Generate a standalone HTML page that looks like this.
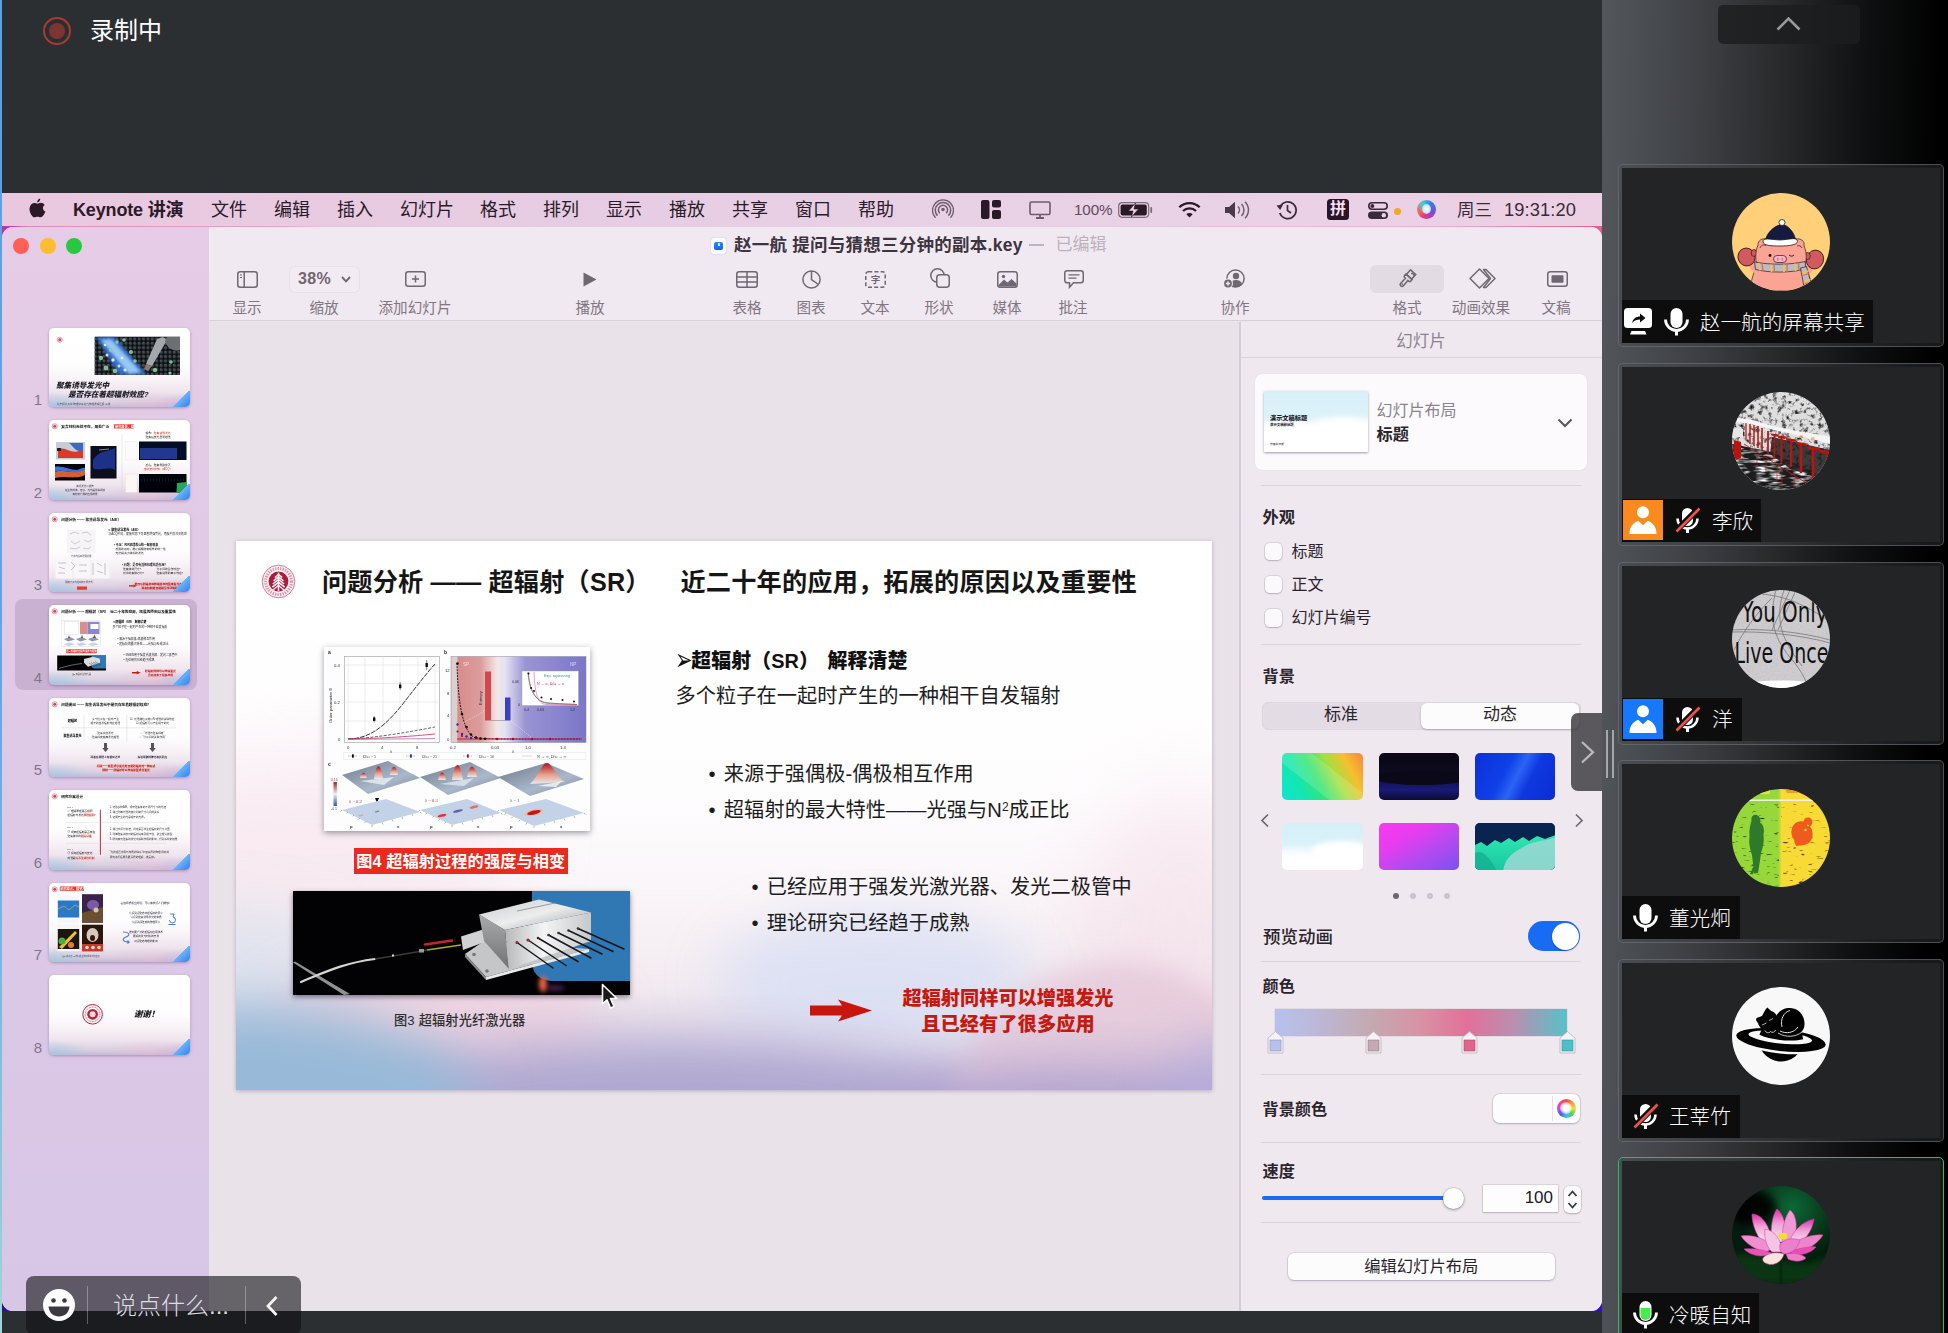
<!DOCTYPE html>
<html lang="zh-CN">
<head>
<meta charset="utf-8">
<title>Keynote 屏幕共享</title>
<style>
*{box-sizing:border-box;margin:0;padding:0}
html,body{width:1948px;height:1333px;overflow:hidden;background:#2c2f32}
body{position:relative;font-family:"Liberation Sans","Noto Sans CJK SC",sans-serif;color:#222;-webkit-font-smoothing:antialiased}
.abs{position:absolute}
#strip{left:0;top:0;width:2px;height:1333px;background:linear-gradient(#5b9fe3 0%,#62a6e4 50%,#86c0dc 82%,#a2d4d8 100%)}
#share{left:2px;top:0;width:1600px;height:1333px;background:#2c2f32;overflow:hidden}
#rec{left:41px;top:17px;width:28px;height:28px;border-radius:50%;border:2px solid #a83a32}
#rec i{position:absolute;left:4px;top:4px;width:16px;height:16px;border-radius:50%;background:#7d3531}
#rectxt{left:88px;top:13px;font-size:24px;color:#fff;line-height:36px;letter-spacing:0px}
/* menubar */
#menubar{left:0;top:193px;width:1600px;height:34px;background:linear-gradient(90deg,#e9c8df,#e6cde3 40%,#e9d2e6 70%,#ecd0e4);}
#menubar span{position:absolute;top:0;line-height:34.600px;font-size:18px;color:#2a1a2a;white-space:nowrap}
/* window */
#win{left:0;top:227px;width:1600px;height:1084px;border-radius:11px;background:#ebe4eb;overflow:hidden}
#wbehind{left:0;top:226px;width:1600px;height:30px;background:linear-gradient(90deg,#c032a0 0,#c436a2 .5%,#e58ab6 1.6%,#e9a0c4 17%,#e8c4dc 20%,#ead0e4 60%,#e8b4d0 90%,#e0608c 99.6%)}
#wbehind2{left:0;top:1290px;width:1600px;height:21px;background:linear-gradient(90deg,#2a1090,#4a2aa0 3%,#8a80b0 50%,#3010c0)}
#sidebar{left:0;top:0;width:207px;height:1084px;background:linear-gradient(180deg,#e6cce6,#dcc8e6 60%,#d8c6e6)}
#toolbar{left:207px;top:0;width:1393px;height:94px;background:#f1e9f1;border-bottom:1px solid #d9d0da}
#canvas{left:207px;top:95px;width:1031px;height:989px;background:#e9e2e9}
#panel{left:1239px;top:95px;width:361px;height:989px;background:#efe8ef}
#bottomstrip{left:0;top:1311px;width:1600px;height:22px;background:#2c2f32}
/* right participants */
#right{left:1602px;top:0;width:346px;height:1333px;background:linear-gradient(91deg,#53575c 0%,#3d3f43 28%,#262729 51%,#0f1011 72%,#000 92%)}
</style>
</head>
<body>
<div id="strip" class="abs"></div>
<div id="share" class="abs">
  <div id="rec" class="abs"><i></i></div>
  <div id="rectxt" class="abs">录制中</div>
  <div id="menubar" class="abs"><svg class="abs" style="left:26px;top:4px" width="19" height="23" viewBox="0 0 19 23"><path d="M12.600 0 C12.800 1.600 11.600 3.800 9.500 4.200 C9.200 2.500 10.700 .4 12.600 0 Z M9.700 5.400 C10.700 5.400 11.700 4.500 13.300 4.500 C14.600 4.500 16.200 5.200 17.200 6.700 C14.500 8.400 15 12.400 17.900 13.500 C17.300 15.300 16.400 16.900 15.300 18.100 C14.500 19 13.700 19.400 12.900 19.400 C11.800 19.400 11.200 18.700 9.800 18.700 C8.400 18.700 7.700 19.400 6.700 19.400 C5.800 19.400 5 18.800 4.100 17.700 C1.600 14.700 .6 9.900 2.700 7 C3.600 5.600 5.100 4.700 6.500 4.700 C7.900 4.700 8.800 5.400 9.700 5.400 Z" transform="translate(0,1.500) scale(.97)" fill="#2a1a28"/></svg>
<span style="left:71px;font-weight:700;letter-spacing:-.15px">Keynote 讲演</span>
<span style="left:209px">文件</span><span style="left:272px">编辑</span><span style="left:335px">插入</span><span style="left:398px">幻灯片</span><span style="left:478px">格式</span><span style="left:541px">排列</span><span style="left:604px">显示</span><span style="left:667px">播放</span><span style="left:730px">共享</span><span style="left:793px">窗口</span><span style="left:856px">帮助</span>
<!-- status icons -->
<svg class="abs" style="left:930px;top:6px" width="22" height="21" viewBox="0 0 22 21" fill="none" stroke="#6d5c6c" stroke-width="1.500"><circle cx="11" cy="10.500" r="1.800" fill="#6d5c6c" stroke="none"/><path d="M7.800 14.200 A4.600 4.600 0 1 1 14.200 14.200"/><path d="M5.600 16.600 A7.700 7.700 0 1 1 16.400 16.600"/><path d="M3.500 18.800 A10.500 10.500 0 1 1 18.500 18.800" stroke-width="1.300"/></svg>
<svg class="abs" style="left:979px;top:7px" width="20" height="19" viewBox="0 0 20 19" fill="#2a1a28"><rect x="0" y="0" width="8.500" height="19" rx="2"/><rect x="11" y="0" width="9" height="7.500" rx="2"/><rect x="11" y="10" width="9" height="9" rx="2"/></svg>
<svg class="abs" style="left:1027px;top:8px" width="22" height="18" viewBox="0 0 22 18" fill="none" stroke="#6d5c6c" stroke-width="1.600"><rect x="1" y="1" width="20" height="12.500" rx="1.500"/><path d="M7 17 L15 17 M11 13.500 L11 17" stroke-width="1.800"/></svg>
<span style="left:1072px;font-size:15.200px;color:#5c4c5c;letter-spacing:-.1px">100%</span>
<svg class="abs" style="left:1116px;top:9px" width="35" height="16" viewBox="0 0 35 16"><rect x=".7" y=".7" width="30" height="14.600" rx="3.500" fill="none" stroke="#7d6c7c" stroke-width="1.200"/><rect x="2.600" y="2.600" width="26.200" height="10.800" rx="2" fill="#2a1a28"/><rect x="32.300" y="5" width="1.800" height="6" rx=".9" fill="#7d6c7c"/><path d="M17.500 1 L10.500 9 L15 9 L13.500 15 L20.500 7 L16 7 Z" fill="#ead0e4" stroke="#2a1a28" stroke-width=".6"/></svg>
<svg class="abs" style="left:1176px;top:8px" width="23" height="17" viewBox="0 0 23 17" fill="none" stroke="#2a1a28" stroke-width="2.300" stroke-linecap="butt"><path d="M1.300 6.300 A14.500 14.500 0 0 1 21.700 6.300"/><path d="M5 10 A9.200 9.200 0 0 1 18 10"/><path d="M11.500 16.500 L8.300 13.200 A4.600 4.600 0 0 1 14.700 13.200 Z" fill="#2a1a28" stroke="none"/></svg>
<svg class="abs" style="left:1223px;top:8px" width="26" height="18" viewBox="0 0 26 18"><path d="M0 6 L4 6 L10 .8 L10 17.200 L4 12 L0 12 Z" fill="#4a3a4a"/><path d="M13 5.500 A5 5 0 0 1 13 12.500 M16.500 3 A8.500 8.500 0 0 1 16.500 15 M20 .8 A11.500 11.500 0 0 1 20 17.200" fill="none" stroke="#6d5c6c" stroke-width="1.500"/></svg>
<svg class="abs" style="left:1274px;top:7px" width="22" height="20" viewBox="0 0 22 20" fill="none" stroke="#3a2a3a" stroke-width="1.700"><path d="M4.200 6.500 A8.400 8.400 0 1 1 3.800 13"/><path d="M.5 5.500 L4.200 10 L7 4.500 Z" fill="#3a2a3a" stroke="none"/><path d="M11.500 5 L11.500 10.500 L15 13"/></svg>
<div class="abs" style="left:1325px;top:6px;width:22px;height:21px;border-radius:3.500px;background:#2a1528;color:#f3dff0;font-size:16px;font-weight:700;line-height:20px;text-align:center">拼</div>
<svg class="abs" style="left:1366px;top:9px" width="20" height="17" viewBox="0 0 20 17"><rect x=".8" y=".8" width="18.400" height="6.400" rx="3.200" fill="none" stroke="#3a2a3a" stroke-width="1.600"/><circle cx="4.300" cy="4" r="2" fill="#3a2a3a"/><rect x="0" y="9.500" width="20" height="7.500" rx="3.750" fill="#3a2a3a"/><circle cx="15.800" cy="13.250" r="2.200" fill="#ecd2e6"/></svg>
<div class="abs" style="left:1392px;top:15px;width:7px;height:7px;border-radius:50%;background:#f5a623"></div>
<div class="abs" style="left:1415px;top:7px;width:19px;height:19px;border-radius:50%;background:conic-gradient(from 200deg,#e23a7a,#f06a60 15%,#4ad0c8 35%,#3a7ae8 55%,#7a4ae0 75%,#e23a7a);overflow:hidden"><div style="position:absolute;left:5px;top:4px;width:9px;height:10px;border-radius:50%;background:radial-gradient(#fff,#bfe8f0 60%,rgba(160,220,240,0))"></div></div>
<span style="left:1455px;color:#3a2a3a;font-size:17.500px">周三</span>
<span style="left:1502px;color:#3a2a3a;font-size:18.300px;letter-spacing:.1px">19:31:20</span>
</div>
  <div id="wbehind" class="abs"></div>
  <div id="wbehind2" class="abs"></div>
  <div id="win" class="abs">
    <div id="sidebar" class="abs"><style>
.tl{position:absolute;left:18px;top:18.500px;width:16px;height:16px;border-radius:50%}
#sel{position:absolute;left:12.500px;top:371.500px;width:182px;height:91px;border-radius:8px;background:#c9b1d1}
.th{position:absolute;left:47px;width:141px;height:79.500px;border-radius:5px;overflow:hidden;box-shadow:0 1px 3px rgba(70,40,90,.35);
background:radial-gradient(ellipse 44px 15px at 0% 100%,rgba(160,200,228,.8),rgba(160,195,226,0) 100%),radial-gradient(ellipse 40px 14px at 100% 100%,rgba(184,176,226,.6),rgba(190,175,225,0) 100%),radial-gradient(ellipse 45px 14px at 74% 98%,rgba(238,184,208,.45),rgba(240,180,205,0) 100%),linear-gradient(180deg,#fff 0%,#fefdfe 48%,#f8f2f6 66%,#eee4ed 82%,#d9cfe0 94%,#c4bad6 100%)}
.th svg{position:absolute;left:0;top:0;font-family:"Liberation Sans","Noto Sans CJK SC",sans-serif}
.th:after{content:"";position:absolute;right:0;bottom:0;width:18px;height:16px;background:linear-gradient(135deg,rgba(90,168,248,0) 49%,#6ab2fa 50%,#2f80ea 100%)}
.tn{position:absolute;width:30px;left:21px;text-align:center;font-size:15px;color:#81768a;line-height:18px}
</style>
<div class="tl" style="left:10.500px;top:11px;background:#fe5f57"></div><div class="tl" style="left:37.500px;top:11px;background:#febc2e"></div><div class="tl" style="left:64px;top:11px;background:#28c840"></div>
<div id="sel"></div>
<div class="tn" style="top:164px">1</div><div class="tn" style="top:256.500px">2</div><div class="tn" style="top:349px">3</div><div class="tn" style="top:441.500px">4</div><div class="tn" style="top:534px">5</div><div class="tn" style="top:626.500px">6</div><div class="tn" style="top:719px">7</div><div class="tn" style="top:811.500px">8</div>
<svg width="0" height="0" style="position:absolute"><defs>
<g id="lg"><circle r="2.600" fill="#fbf3f5" stroke="#c8485c" stroke-width=".5"/><circle r="1.500" fill="#c8485c"/></g>
<filter id="beads" x="0" y="0" width="100%" height="100%"><feTurbulence type="turbulence" baseFrequency=".28" numOctaves="2" seed="11"/><feColorMatrix values="0 0 0 0 .35  0 0 0 0 .62  0 0 0 0 .95  2.400 0 0 0 -.55"/><feComposite in2="SourceGraphic" operator="in"/></filter>
<filter id="tb"><feGaussianBlur stdDeviation=".3"/></filter><filter id="tb2" x="-20%" y="-20%" width="140%" height="140%"><feGaussianBlur stdDeviation="1.600"/></filter><clipPath id="c1"><rect x="45.500" y="8.500" width="85.500" height="38.500"/></clipPath><pattern id="bdp" width="4.400" height="4.400" patternUnits="userSpaceOnUse"><circle cx="2.200" cy="2.200" r="1.700" fill="#3a4044"/><circle cx="1.700" cy="1.700" r=".6" fill="#6a7074"/></pattern>
</defs></svg>
<!-- 1 -->
<div class="th" style="top:100.500px"><svg width="141" height="79.500" viewBox="0 0 141 79.500"><g filter="url(#tb)">
<use href="#lg" x="10.800" y="11.800"/>
<g clip-path="url(#c1)"><rect x="45.500" y="8.500" width="85.500" height="38.500" fill="#0c1014"/><rect x="45.500" y="8.500" width="85.500" height="38.500" fill="url(#bdp)"/>
<path d="M47 9 L66 9 L98 47 L70 47 Z" fill="#3a78e0" opacity=".9" filter="url(#tb2)"/><path d="M52 12 L62 11 L92 44 L80 46 Z" fill="#a8d8f8" opacity=".85" filter="url(#tb2)"/>
<g fill="#8ad0a0" opacity=".9" filter="url(#tb)"><circle cx="52" cy="30" r="2.200"/><circle cx="57" cy="40" r="2.400"/><circle cx="66" cy="43" r="2.300"/><circle cx="62" cy="22" r="2"/><circle cx="68" cy="14" r="1.800"/><circle cx="75" cy="12" r="1.800"/><circle cx="82" cy="24" r="2"/><circle cx="86" cy="33" r="1.800"/><circle cx="106" cy="42" r="2.200"/><circle cx="122" cy="34" r="1.800"/><circle cx="121" cy="45" r="1.600"/></g>
<g fill="#e8f4fc" opacity=".9" filter="url(#tb)"><circle cx="58" cy="27" r="1.500"/><circle cx="64" cy="32" r="1.700"/><circle cx="70" cy="38" r="1.500"/><circle cx="76" cy="42" r="1.600"/><circle cx="56" cy="17" r="1.300"/><circle cx="73" cy="30" r="1.300"/></g>
<path d="M108 11 L114 9 L118 12 L103 38 L97 36 Z" fill="#a4a8aa" filter="url(#tb)"/><path d="M118 9 L131 9 L131 22 C124 24 118 20 116 13 Z" fill="#6c7072" filter="url(#tb)"/><path d="M97 36 L103 38 L99 43 L95 41 Z" fill="#8a7868"/></g>
<text x="7" y="59.500" font-size="7.600" font-weight="900" font-style="italic" fill="#1a1a24">聚集诱导发光中</text>
<text x="19" y="69" font-size="7.600" font-weight="900" font-style="italic" fill="#1a1a24">是否存在着超辐射效应?</text>
<text x="8" y="76.500" font-size="2.600" fill="#445">北京师范大学 物理学系近代物理课程汇报 三组</text></g></svg></div>
<!-- 2 -->
<div class="th" style="top:193px"><svg width="141" height="79.500" viewBox="0 0 141 79.500"><g filter="url(#tb)">
<use href="#lg" x="5.700" y="6.300"/><text x="12.300" y="7.700" font-size="3.700" font-weight="700" fill="#111">复合材料无处不在，用处广泛</text>
<rect x="65" y="4.300" width="19.500" height="4.200" fill="#e83a2c"/><text x="66" y="7.600" font-size="3.200" font-weight="700" fill="#fff">研究背景、现象</text>
<rect x="7" y="22" width="29" height="17.500" fill="#c8ccd8"/><path d="M9 30 C16 24 24 38 34 28 L34 38 L9 38 Z" fill="#d83a2a"/><path d="M20 23 L34 23 L34 30 C28 34 24 26 20 23 Z" fill="#3a6ac0"/><rect x="8" y="28" width="4" height="3" fill="#222"/>
<rect x="6" y="44" width="30" height="16.500" fill="#06060e"/><path d="M6 52 C14 48 22 56 36 49 L36 55 C26 60 16 55 6 58 Z" fill="#d8602e"/><path d="M6 47 C12 45 20 50 28 50 C32 49 34 47 36 48 L36 50 C24 56 14 48 6 52 Z" fill="#3a72e0"/>
<rect x="41.500" y="26" width="26" height="32.500" fill="#070a1e"/><path d="M44 40 C50 30 58 32 66 28 L66 50 C58 46 50 52 44 48 Z" fill="#1c3088"/><path d="M50 30 L60 29" stroke="#3ac060" stroke-width="1"/>
<path d="M73 14 V72" stroke="#bbb" stroke-width=".3"/>
<text x="109" y="13.500" font-size="2.800" text-anchor="middle" fill="#222">现象：<tspan fill="#d03020">聚集诱导发光</tspan></text><text x="109" y="17.700" font-size="2.800" text-anchor="middle" fill="#222">聚集后荧光显著增强</text>
<rect x="76.500" y="21.500" width="11.500" height="18.500" fill="#fbfbfb" stroke="#ccc" stroke-width=".2"/><rect x="90" y="21.500" width="47.500" height="18.500" fill="#060a20"/><rect x="91" y="28" width="37" height="11" fill="#22398e"/>
<text x="109" y="46" font-size="2.800" text-anchor="middle" fill="#222">反之，聚集导致猝灭</text><text x="109" y="50" font-size="2.800" text-anchor="middle" fill="#d03020">传统荧光材料（ACQ）</text>
<rect x="76.500" y="54" width="11.500" height="18.500" fill="#fbf6f2" stroke="#ccc" stroke-width=".2"/><rect x="90" y="54" width="47.500" height="18.500" fill="#04060a"/><path d="M127.500 72.500 L128 63 L137.500 62 L137.500 72.500 Z" fill="#26a458"/><path d="M92 60 H136" stroke="#3a5" stroke-width=".3" stroke-dasharray="1 2"/>
<text x="36" y="67" font-size="2.500" text-anchor="middle" fill="#334">有机发光二极管</text><text x="36" y="70.800" font-size="2.500" text-anchor="middle" fill="#334">在生物成像、传感、光电器件等领域</text><text x="36" y="74.600" font-size="2.500" text-anchor="middle" fill="#334">有非常广阔的应用前景</text></g></svg></div>
<!-- 3 -->
<div class="th" style="top:285.500px"><svg width="141" height="79.500" viewBox="0 0 141 79.500"><g filter="url(#tb)">
<use href="#lg" x="5.700" y="6.300"/><text x="12.300" y="7.700" font-size="3.700" font-weight="700" fill="#111">问题分析 —— 聚集诱导发光（AIE）</text>
<rect x="18" y="17" width="28.500" height="23" fill="#f6f4f6"/><g stroke="#8a8a90" stroke-width=".4" fill="none"><path d="M21 21 l5 -2 l4 2 M33 20 l5 -1 l4 3 M22 28 l4 3 l5 -3 M35 27 l4 2 l4 -2 M21 35 l6 1 l4 -2 M34 35 l5 1 l3 -2"/></g>
<text x="32" y="43.500" font-size="2.300" text-anchor="middle" fill="#445">分子内运动受限机理</text>
<rect x="6.500" y="47" width="54" height="18.500" fill="#f8f6f8"/><g stroke="#77777d" stroke-width=".4" fill="none"><path d="M9 50 h8 M10 54 l6 2 M9 60 h7 M22 49 l4 4 l-4 4 M30 52 h8 M30 58 h8 M44 50 v12 M48 50 l5 3 M48 58 l6 2 M56 50 v12"/></g><path d="M24 47 V65.500 M42 47 V65.500" stroke="#ccc" stroke-width=".3"/>
<text x="30" y="69.500" font-size="2.300" text-anchor="middle" fill="#445">限制分子内运动的不同方式</text><rect x="28" y="73.500" width="10" height="3.200" fill="#e83a2c"/>
<text x="59.300" y="17.800" font-size="3" font-weight="900" fill="#111">➢聚集诱导发光（AIE）</text><text x="59.300" y="22" font-size="2.900" fill="#222">与ACQ不同，聚集状态下可显著增强荧光，克服不良淬灭效应</text>
<text x="65" y="32.500" font-size="2.900" font-weight="700" fill="#111">• 不足：RIR机理难以统一解释现象</text><text x="66.500" y="36.800" font-size="2.800" fill="#222">受限的运动，难以解释所有现象的统一性</text><text x="66.500" y="41" font-size="2.800" fill="#222">无法解决小体系的发光</text>
<text x="73" y="52.500" font-size="2.900" font-weight="700" fill="#111">• 问题：是否有其他机理在起作用？</text><text x="74" y="56.700" font-size="2.800" fill="#222">聚集体的尺寸？　　　　　分子间的合作效应？</text><text x="74" y="60.800" font-size="2.800" fill="#222">光学的集体行为？　　　　聚集诱导的量子效应？</text>
<path d="M80 72.200 h5 l-1 -1 l3.500 1.700 l-3.500 1.700 l1 -1 h-5 Z" fill="#c9160c"/><text x="112" y="72" font-size="2.800" font-weight="900" text-anchor="middle" fill="#cf1d12">是否与超辐射这种凝聚态的集体发光有关？</text><text x="112" y="75.800" font-size="2.800" font-weight="900" text-anchor="middle" fill="#cf1d12">两者机制是否能相互印证解释？</text></g></svg></div>
<!-- 4 -->
<div class="th" style="top:378px"><svg width="141" height="79.500" viewBox="0 0 141 79.500"><g filter="url(#tb)">
<use href="#lg" x="5.700" y="6.300"/><text x="12.300" y="7.700" font-size="3.650" font-weight="700" fill="#111">问题分析 —— 超辐射（SR）　近二十年的应用，拓展的原因以及重要性</text>
<rect x="12.700" y="15.300" width="38.500" height="26.500" fill="#fdfdfd" stroke="#bbb" stroke-width=".2"/><rect x="15.500" y="16.800" width="14" height="12.300" fill="#fff" stroke="#aaa" stroke-width=".2"/><rect x="31" y="16.800" width="7.500" height="12.300" fill="#d8908e"/><rect x="38.500" y="16.800" width="12" height="12.300" fill="#8a86d0"/><rect x="41.500" y="19" width="8" height="5" fill="#fff"/><path d="M15 34 l6 -2 l5 2.500 l-7 2 Z M27 34 l6 -2 l5 2.500 l-7 2 Z M39 34 l6 -2 l5 2.500 l-7 2 Z" fill="#8a96aa"/><path d="M15 39 l6 -1.500 l5 2 l-7 1.500 Z M27 39 l6 -1.500 l5 2 l-7 1.500 Z M39 39 l6 -1.500 l5 2 l-7 1.500 Z" fill="#c4d2e8"/><path d="M19 33 l1 -3 l1 3 M32 33 l1 -3.500 l1 3.500 M44 33 l1.500 -3.500 l1.500 3.500" fill="#c03030"/>
<rect x="17" y="44.300" width="31" height="3.900" fill="#e92a1c"/><text x="32.500" y="47.300" font-size="2.400" font-weight="700" fill="#fff" text-anchor="middle">图4 超辐射过程的强度与相变</text>
<rect x="8.200" y="50.500" width="48.800" height="15" fill="#020204"/><path d="M42.700 50.500 H57 V63.500 H45.500 Q42.700 63.300 42.700 60.500 Z" fill="#2f78b4"/><path d="M35 54 l9 -2.200 l7 2 l0 4 l-12 4 l-4 -4 Z" fill="#dcdcdc"/><path d="M10 63.500 C18 61 24 59.500 33 58.500" stroke="#ccc" stroke-width=".5" fill="none"/><path d="M40 58 l6 4 M42 57.500 l6 4 M44 57 l6 3.500 M46 56.500 l6 3.500" stroke="#222" stroke-width=".35"/>
<text x="32.500" y="70" font-size="1.900" text-anchor="middle" fill="#333">图3 超辐射光纤激光器</text>
<text x="63.500" y="18.300" font-size="2.900" font-weight="900" fill="#111">➢超辐射（SR） 解释清楚</text><text x="63.500" y="23.300" font-size="2.900" fill="#222">多个粒子在一起时产生的一种相干自发辐射</text>
<text x="68.400" y="34.700" font-size="2.900" fill="#222">• 来源于强偶极-偶极相互作用</text><text x="68.400" y="39.800" font-size="2.900" fill="#222">• 超辐射的最大特性——光强与N²成正比</text>
<text x="74.600" y="51" font-size="2.900" fill="#222">• 已经应用于强发光激光器、发光二极管中</text><text x="74.600" y="56.200" font-size="2.900" fill="#222">• 理论研究已经趋于成熟</text>
<path d="M83 67 h5 l-.800 -1.200 l4.500 1.900 l-4.500 1.900 l.800 -1.200 h-5 Z" fill="#c9160c"/><text x="111.500" y="67.300" font-size="2.800" font-weight="900" text-anchor="middle" fill="#cf1d12">超辐射同样可以增强发光</text><text x="111.500" y="71" font-size="2.800" font-weight="900" text-anchor="middle" fill="#cf1d12">且已经有了很多应用</text></g></svg></div>
<!-- 5 -->
<div class="th" style="top:470.500px"><svg width="141" height="79.500" viewBox="0 0 141 79.500"><g filter="url(#tb)">
<use href="#lg" x="5.700" y="6.300"/><text x="12.300" y="7.700" font-size="3.650" font-weight="700" fill="#111">问题提出 —— 聚集诱导发光中是否存在着超辐射效应？</text>
<path d="M35 17 V43 M77.800 17 V43 M13 29.800 H127" stroke="#bbb" stroke-width=".3"/>
<text x="23.500" y="23.600" font-size="3" font-weight="900" text-anchor="middle" fill="#111">超辐射</text><text x="23.500" y="38.600" font-size="3" font-weight="900" text-anchor="middle" fill="#111">聚集诱导发光</text>
<text x="56.400" y="21.800" font-size="2.700" text-anchor="middle" fill="#333">多个粒子在一起时产生</text><text x="56.400" y="26" font-size="2.700" text-anchor="middle" fill="#333">相干的自发辐射效应增强</text><text x="103.400" y="21.800" font-size="2.700" text-anchor="middle" fill="#333">☑ 光强随粒子数以N²增强的关联效应</text><text x="103.400" y="26" font-size="2.700" text-anchor="middle" fill="#333">☑ 超辐射可以产生相干的光</text>
<text x="56.400" y="35.800" font-size="2.700" text-anchor="middle" fill="#333">聚集状态发光</text><text x="56.400" y="40" font-size="2.700" text-anchor="middle" fill="#333">聚集程度越高发光越强</text><text x="103.400" y="35.800" font-size="2.700" text-anchor="middle" fill="#333">ⓘ “光强与聚集程度”</text><text x="103.400" y="40" font-size="2.700" text-anchor="middle" fill="#333">ⓘ “分子间的关联作用”</text>
<path d="M55 45 h3 v5 h1.800 l-3.300 4 l-3.300 -4 h1.800 Z M102 45 h3 v5 h1.800 l-3.300 4 l-3.300 -4 h1.800 Z" fill="#555"/>
<text x="56.400" y="60" font-size="2.700" font-weight="700" text-anchor="middle" fill="#223">两者在原理上有相似之处</text><text x="103.400" y="60" font-size="2.700" font-weight="700" text-anchor="middle" fill="#223">实验现象规律也有共同点</text>
<text x="77" y="69" font-size="2.800" font-weight="900" text-anchor="middle" fill="#cf1d12">问题——聚集诱导发光是否是超辐射的一种形式</text><text x="77" y="73.300" font-size="2.800" font-weight="900" text-anchor="middle" fill="#cf1d12">猜想——超辐射可以增强聚集诱导发光</text></g></svg></div>
<!-- 6 -->
<div class="th" style="top:563px"><svg width="141" height="79.500" viewBox="0 0 141 79.500"><g filter="url(#tb)">
<use href="#lg" x="5.700" y="6.300"/><text x="12.300" y="7.700" font-size="3.650" font-weight="700" fill="#111">研究方案设计</text>
<rect x="50.900" y="19.700" width=".9" height="45" fill="#a8202c"/><path d="M16.500 32.500 H117.700 M16.500 53.300 H117.700" stroke="#c8c4cc" stroke-width=".3"/>
<text x="18" y="17.600" font-size="2" fill="#556">Step 1</text><text x="18.500" y="22" font-size="2.700" fill="#222">① 理解原理是否相同</text><text x="18.500" y="26.200" font-size="2.700" fill="#222">超辐射与发光<tspan fill="#d03020" font-weight="700">原理相同？</tspan></text>
<text x="18" y="38" font-size="2" fill="#556">Step 2</text><text x="18.500" y="42.800" font-size="2.700" fill="#222">② 观察超辐射是否存在</text><text x="18.500" y="47" font-size="2.700" fill="#222">聚集体中的<tspan fill="#d03020" font-weight="700">相关证据</tspan></text>
<text x="18" y="59.700" font-size="2" fill="#556">Step 3</text><text x="18.500" y="64.300" font-size="2.700" fill="#222">③ 探究超辐射与荧光</text><text x="18.500" y="68.500" font-size="2.700" fill="#222">的强弱<tspan fill="#d03020" font-weight="700">关系及调控机制</tspan></text>
<text x="60.700" y="17.800" font-size="2.600" fill="#333">1. 选取多种AIE，观察聚集体的不同尺寸下的光谱</text><text x="60.700" y="23.400" font-size="2.600" fill="#333">2. 通过测量光强的变化判断尺寸之间的关系</text><text x="60.700" y="28" font-size="2.600" fill="#333">3. 证明产生的光是相干的光源。</text>
<text x="60.700" y="40" font-size="2.600" fill="#333">1. 通过时间分辨谱，判定是否发生超辐射的尺寸范围</text><text x="60.700" y="45" font-size="2.600" fill="#333">2. 测量聚集状态时的辐射速率及相干性，建立理论模型</text><text x="60.700" y="49.700" font-size="2.600" fill="#333">3. 研究有无聚集的发光中关联作用的影响，得到系统的结果</text>
<text x="60.700" y="63.400" font-size="2.600" fill="#333">“光的相互作用与物质的联系”中最底层的物理机制 的</text><text x="60.700" y="68" font-size="2.600" fill="#333">研究进行拓展及更深层的理解，做贡献。</text></g></svg></div>
<!-- 7 -->
<div class="th" style="top:655.500px"><svg width="141" height="79.500" viewBox="0 0 141 79.500"><g filter="url(#tb)">
<use href="#lg" x="5.700" y="6.300"/><rect x="10.800" y="3.500" width="24.200" height="4.300" fill="#e83a2c"/><text x="11.600" y="6.900" font-size="3.100" font-weight="700" fill="#fff">研究意义、展望方向</text>
<rect x="8.800" y="13.200" width="21.400" height="26.500" fill="#f4f6f8"/><rect x="8.800" y="17.500" width="21.400" height="17" fill="#2a78c8"/><path d="M9 26 l6 -3 l5 4 l6 -5 l4 2" stroke="#e8c040" stroke-width=".6" fill="none"/>
<rect x="33" y="11.200" width="21" height="28.500" fill="#3a2448"/><path d="M33 30 L54 24 V39.700 H33 Z" fill="#6a5030"/><ellipse cx="44" cy="22" rx="6" ry="5" fill="#7a5aa8"/><circle cx="47" cy="27" r="2.500" fill="#d8c0b0"/>
<rect x="8.800" y="41.700" width="21.400" height="26.500" fill="#f4f6f8"/><rect x="8.800" y="46" width="21.400" height="20" fill="#1c1408"/><path d="M10 64 L26 48 l2 2 L13 66 Z" fill="#f0c028"/><circle cx="13" cy="58" r="3.500" fill="#48b040"/><circle cx="22" cy="62" r="3" fill="#e87830"/>
<rect x="33" y="41.700" width="21" height="26.500" fill="#2a1410"/><ellipse cx="43.500" cy="52" rx="6" ry="7" fill="#d8c8b8"/><ellipse cx="43.500" cy="55" rx="2.500" ry="3" fill="#3a1410"/><rect x="33" y="61" width="21" height="7.200" fill="#c83828"/><circle cx="38" cy="64.500" r="1.800" fill="#f0d8d0"/><circle cx="44" cy="64.500" r="1.800" fill="#f0d8d0"/><circle cx="50" cy="64.500" r="1.800" fill="#f0d8d0"/>
<text x="32" y="74.300" font-size="2" text-anchor="middle" fill="#445">图5 高亮度AIE材料在生物成像等中的应用</text>
<text x="97" y="21.300" font-size="2.700" text-anchor="middle" fill="#223">若该猜想成立的话，可以使我们人们能够：</text>
<text x="97" y="30.700" font-size="2.600" text-anchor="middle" fill="#223">认识到凝聚态中超辐射的意义</text><text x="97" y="35.200" font-size="2.600" text-anchor="middle" fill="#223">认识到聚集诱导发光的本质</text><text x="97" y="39.600" font-size="2.600" text-anchor="middle" fill="#223">认识到凝聚态的物理意义</text>
<text x="97" y="49.800" font-size="2.600" text-anchor="middle" fill="#223">推动更广泛的超辐射应用技术</text><text x="97" y="54.300" font-size="2.600" text-anchor="middle" fill="#223">更好的发光材料的开发</text><text x="97" y="58.700" font-size="2.600" text-anchor="middle" fill="#223">对凝聚态物理的影响</text>
<path d="M121 31 h4 l-1 3 a3 3 0 1 1 -3.500 3 M119.500 41.500 h7" stroke="#3a6ad0" stroke-width=".9" fill="none"/>
<path d="M74 49 c6 0 8 3 3 5 c-5 2 -3 5 3 5 l-1.500 -1.500 M80 59 l-1.500 1.500" stroke="#4a7ad8" stroke-width="1.100" fill="none"/></g></svg></div>
<!-- 8 -->
<div class="th" style="top:748px"><svg width="141" height="79.500" viewBox="0 0 141 79.500"><g filter="url(#tb)">
<circle cx="43.600" cy="39.300" r="9.800" fill="#fbf3f5" stroke="#b5243a" stroke-width="1"/><circle cx="43.600" cy="39.300" r="7.300" fill="none" stroke="#b5243a" stroke-width=".7" stroke-dasharray=".9 .7"/><circle cx="43.600" cy="39.300" r="5.400" fill="#b5243a"/><circle cx="43.600" cy="39.300" r="3" fill="#f3d4da"/>
<text x="85" y="41.800" font-size="8.400" font-weight="900" font-style="italic" fill="#18181c">谢谢！</text></g></svg></div>
</div>
    <div id="toolbar" class="abs"><style>
#toolbar .lb{position:absolute;top:71px;font-size:14.600px;line-height:20px;color:#7f7681;white-space:nowrap;transform:translateX(-50%)}
#toolbar svg{position:absolute;overflow:visible}
.tk{fill:none;stroke:#6f6771;stroke-width:1.500}
</style>
<!-- coordinates relative to toolbar: x-209, y-227 -->
<svg style="left:28px;top:44px" width="21" height="17" viewBox="0 0 21 17"><rect class="tk" x=".75" y=".75" width="19.500" height="15.500" rx="2.500"/><path class="tk" d="M7.200 1 L7.200 16"/><path d="M3 4 L5 4 M3 6.500 L5 6.500" stroke="#6f6771" stroke-width="1"/></svg>
<div class="lb" style="left:38px">显示</div>
<div class="abs" style="left:80px;top:39px;width:71px;height:27px;border-radius:6px;border:1px solid rgba(120,100,120,.08);background:rgba(255,255,255,.12)"></div>
<div class="abs" style="left:89px;top:41px;font-size:16px;font-weight:700;color:#6f6771;line-height:22px;letter-spacing:.3px">38%</div>
<svg style="left:132px;top:49px" width="10" height="7" viewBox="0 0 10 7"><path d="M1 1 L5 5.300 L9 1" fill="none" stroke="#6f6771" stroke-width="1.900"/></svg>
<div class="lb" style="left:115px">缩放</div>
<svg style="left:196px;top:44px" width="21" height="16" viewBox="0 0 21 16"><rect class="tk" x=".75" y=".75" width="19.500" height="14.500" rx="2.500"/><path class="tk" d="M10.500 4.500 L10.500 11.500 M7 8 L14 8"/></svg>
<div class="lb" style="left:206px">添加幻灯片</div>
<svg style="left:374px;top:45px" width="14" height="15" viewBox="0 0 14 15"><path d="M.5 .5 L13.500 7.500 L.5 14.500 Z" fill="#6f6771"/></svg>
<div class="lb" style="left:381px">播放</div>
<svg style="left:527px;top:44px" width="22" height="17" viewBox="0 0 22 17"><rect class="tk" x=".75" y=".75" width="20.500" height="15.500" rx="2.500"/><path class="tk" d="M1 6 L21 6 M1 11 L21 11 M11 1 L11 16"/></svg>
<div class="lb" style="left:538px">表格</div>
<svg style="left:593px;top:43px" width="19" height="19" viewBox="0 0 19 19"><circle class="tk" cx="9.500" cy="9.500" r="8.600"/><path class="tk" d="M9.500 1 L9.500 9.500 L16.500 14.500"/></svg>
<div class="lb" style="left:602px">图表</div>
<svg style="left:656px;top:44px" width="21" height="17" viewBox="0 0 21 17"><rect class="tk" x=".75" y=".75" width="19.500" height="15.500" rx="2.500" stroke-dasharray="4 2.200"/><text x="10.500" y="12.300" font-size="9.500" text-anchor="middle" fill="#6f6771" font-family="'Liberation Sans','Noto Sans CJK SC',sans-serif" font-weight="700">字</text></svg>
<div class="lb" style="left:666px">文本</div>
<svg style="left:721px;top:41px" width="20" height="20" viewBox="0 0 20 20"><circle class="tk" cx="7.500" cy="7.500" r="6.700"/><rect x="6.750" y="6.750" width="12.500" height="12.500" rx="3" fill="#f1e9f1" stroke="#6f6771" stroke-width="1.500"/></svg>
<div class="lb" style="left:730px">形状</div>
<svg style="left:788px;top:44px" width="21" height="17" viewBox="0 0 21 17"><rect class="tk" x=".75" y=".75" width="19.500" height="15.500" rx="2.500"/><path d="M1.500 14 L7 8.500 L10.500 11.500 L14.500 8 L19.500 12.500 L19.500 15.500 L1.500 15.500 Z" fill="#6f6771"/><circle cx="6.500" cy="5.500" r="1.700" fill="#6f6771"/></svg>
<div class="lb" style="left:798px">媒体</div>
<svg style="left:855px;top:43px" width="20" height="19" viewBox="0 0 20 19"><path class="tk" d="M3.200 .75 L16.800 .75 Q19.250 .75 19.250 3.200 L19.250 10.300 Q19.250 12.750 16.800 12.750 L9.500 12.750 L5.500 17.300 L5.500 12.750 L3.200 12.750 Q.75 12.750 .75 10.300 L.75 3.200 Q.75 .75 3.200 .75 Z"/><path d="M4.500 4.800 L15.500 4.800 M4.500 8.200 L12.500 8.200" stroke="#6f6771" stroke-width="1.200"/></svg>
<div class="lb" style="left:864px">批注</div>
<svg style="left:1014px;top:42px" width="22" height="20" viewBox="0 0 22 20"><circle class="tk" cx="12.500" cy="9.500" r="8.600"/><circle cx="13" cy="7" r="3.200" fill="#6f6771"/><path d="M6.500 15.800 C7.500 12.500 10 11 13 11 C16 11 18.500 12.500 19.300 15.300 C17.500 17.400 15 18.300 12.500 18.300 C10 18.300 8 17.300 6.500 15.800 Z" fill="#6f6771"/><circle cx="5" cy="14.500" r="5" fill="#f1e9f1"/><circle cx="5" cy="14.500" r="3.900" fill="#6f6771"/><path d="M5 12.300 L5 16.700 M2.800 14.500 L7.200 14.500" stroke="#f1e9f1" stroke-width="1.300"/></svg>
<div class="lb" style="left:1026px">协作</div>
<div class="abs" style="left:1161px;top:38px;width:74px;height:28px;border-radius:6px;background:#e3dbe4"></div>
<svg style="left:1188px;top:42px" width="20" height="20" viewBox="0 0 20 20"><g transform="rotate(42 10 10)"><path class="tk" d="M6.500 .8 L13.500 .8 L13.500 7 L6.500 7 Z M10 .8 L10 3.500 M12 .8 L12 3"/><path class="tk" d="M5.800 7 L14.200 7 L14.200 9 Q14.200 10.500 12.700 10.500 L11.600 10.500 L11.800 17 Q11.800 19.200 10 19.200 Q8.200 19.200 8.200 17 L8.400 10.500 L7.300 10.500 Q5.800 10.500 5.800 9 Z"/><circle cx="10" cy="16.800" r=".8" fill="#6f6771"/></g></svg>
<div class="lb" style="left:1198px">格式</div>
<svg style="left:1260px;top:41px" width="27" height="21" viewBox="0 0 27 21"><path class="tk" d="M14.500 1.500 L17 1.500 L26 10.500 L17 19.500 L14.500 19.500 L21.500 10.500 Z" stroke-linejoin="round"/><path class="tk" d="M10.500 1 L20 10.500 L10.500 20 L1 10.500 Z" fill="#f1e9f1" stroke-linejoin="round"/></svg>
<div class="lb" style="left:1272px">动画效果</div>
<svg style="left:1338px;top:44px" width="21" height="16" viewBox="0 0 21 16"><rect class="tk" x=".75" y=".75" width="19.500" height="14.500" rx="2.500"/><rect x="4.500" y="4.300" width="12" height="7.400" rx=".8" fill="#6f6771"/></svg>
<div class="lb" style="left:1347px">文稿</div>
<!-- title -->
<div class="abs" style="left:502px;top:11px;width:15px;height:16px;background:#fdfbfd;border-radius:2px;box-shadow:0 0 1px rgba(0,0,0,.35)"><div style="position:absolute;left:3px;top:3.500px;width:9px;height:8px;border-radius:2px;background:linear-gradient(#2e8cf8,#1560e0)"></div><div style="position:absolute;left:6.500px;top:5px;width:2.500px;height:3px;background:#cfe6ff"></div></div>
<div class="abs" style="left:525px;top:6px;font-size:17.500px;font-weight:700;color:#3c343e;line-height:24px;white-space:nowrap;letter-spacing:.25px">赵一航 提问与猜想三分钟的副本.key</div>
<div class="abs" style="left:820px;top:17px;width:15px;height:1.500px;background:#bcb4be"></div>
<div class="abs" style="left:846.500px;top:6px;font-size:17px;color:#bab2bc;line-height:24px;white-space:nowrap">已编辑</div>
</div>
    <div id="canvas" class="abs"><style>
#slide{position:absolute;left:27px;top:219px;width:976px;height:549px;overflow:hidden;box-shadow:0 1px 4px rgba(60,40,70,.28);
background:linear-gradient(180deg,#fff 0%,#fefdfe 46%,#faf5f8 64%,#f3ebf1 80%,#e4dbe8 92%,#cfc6dc 100%)}
#slide .t{position:absolute;white-space:nowrap;color:#161616;line-height:1}
#slide .h{font-size:25.200px;font-weight:700;top:28.500px;letter-spacing:.17px}
#slide .b{font-size:20.200px;font-weight:400;color:#1c1c1c;letter-spacing:.08px}
</style>
<div id="slide">
 <svg class="abs" style="left:0;top:0" width="976" height="549" viewBox="0 0 976 549">
<defs><filter id="g40" x="-30%" y="-30%" width="160%" height="160%"><feGaussianBlur stdDeviation="38"/></filter><filter id="g28" x="-30%" y="-30%" width="160%" height="160%"><feGaussianBlur stdDeviation="26"/></filter><filter id="g14" x="-30%" y="-30%" width="160%" height="160%"><feGaussianBlur stdDeviation="12"/></filter></defs>
<ellipse cx="70" cy="300" rx="210" ry="95" fill="#f6dfe9" opacity=".55" filter="url(#g40)"/>
<ellipse cx="945" cy="390" rx="100" ry="150" fill="#f3d6e3" opacity=".42" filter="url(#g40)"/>
<ellipse cx="0" cy="470" rx="140" ry="105" fill="#d2deec" opacity=".6" filter="url(#g28)"/>
<ellipse cx="200" cy="478" rx="170" ry="55" fill="#eec8d8" opacity=".6" filter="url(#g28)"/>
<ellipse cx="640" cy="440" rx="160" ry="70" fill="#d6def4" opacity=".75" filter="url(#g28)"/>
<ellipse cx="430" cy="575" rx="330" ry="75" fill="#aea6d0" opacity=".95" filter="url(#g28)"/>
<ellipse cx="0" cy="560" rx="240" ry="95" fill="#98bad8" filter="url(#g28)"/>
<ellipse cx="880" cy="585" rx="165" ry="165" fill="#e4c6d8" opacity=".72" filter="url(#g14)"/>
<ellipse cx="850" cy="600" rx="240" ry="75" fill="#b0a2d0" opacity=".95" filter="url(#g28)"/>
<ellipse cx="990" cy="570" rx="70" ry="70" fill="#b4acdc" opacity=".8" filter="url(#g28)"/>
</svg>

 <svg class="abs" style="left:25px;top:22.700px" width="35" height="35" viewBox="0 0 35 35"><circle cx="17.500" cy="17.500" r="16.300" fill="#fbeff2" stroke="#d27a92" stroke-width="1"/><circle cx="17.500" cy="17.500" r="13" fill="none" stroke="#d4708c" stroke-width="3" stroke-dasharray="1.300 1.200" opacity=".75"/><circle cx="17.500" cy="17.500" r="10.900" fill="#fbeff2"/><circle cx="17.500" cy="17.500" r="9.900" fill="#b01a3a"/><g stroke="#fdf4f6" stroke-width="1.500" fill="none" stroke-linecap="butt"><path d="M17.500 8.500 V27"/><path d="M13.800 13.500 L17.500 10.300 L21.200 13.500" stroke-width="1.300"/><path d="M12.600 16.800 L17.500 12.800 L22.400 16.800"/><path d="M11.800 20 L17.500 15.500 L23.200 20"/><path d="M11.300 23.200 L17.500 18.300 L23.700 23.200"/><path d="M12.300 25.800 L17.500 21.300 L22.700 25.800" stroke-width="1.300"/></g></svg>
 <div class="t h" style="left:86px">问题分析 —— 超辐射（SR）</div>
 <div class="t h" style="left:444.500px">近二十年的应用，拓展的原因以及重要性</div>
 <!-- fig4 -->
 <div class="abs" style="left:88px;top:105.500px;width:266px;height:184px;background:#fdfdfd;box-shadow:0 2px 6px rgba(40,30,50,.45)"><svg width="266" height="184" viewBox="0 0 266 184" style="position:absolute;left:0;top:0;font-family:'Liberation Sans',sans-serif">
<defs>
<linearGradient id="pb" x1="0" x2="1"><stop offset="0" stop-color="#d9d0d0"/><stop offset=".045" stop-color="#d9d0d0"/><stop offset=".05" stop-color="#d98c8c"/><stop offset=".22" stop-color="#dc9c9c"/><stop offset=".34" stop-color="#f4e6e6"/><stop offset=".40" stop-color="#e4e2f2"/><stop offset=".55" stop-color="#9a94d4"/><stop offset="1" stop-color="#7a76c8"/></linearGradient>
<linearGradient id="cb" x1="0" y1="0" x2="0" y2="1"><stop offset="0" stop-color="#b2182b"/><stop offset=".5" stop-color="#eee"/><stop offset="1" stop-color="#2a55c8"/></linearGradient>
<linearGradient id="pl" x1="0" y1="0" x2="1" y2="1"><stop offset="0" stop-color="#6e7886"/><stop offset=".6" stop-color="#aab8cc"/><stop offset="1" stop-color="#7e8896"/></linearGradient>
<linearGradient id="pk" x1="0" y1="0" x2="0" y2="1"><stop offset="0" stop-color="#a81428"/><stop offset=".55" stop-color="#e8a088"/><stop offset="1" stop-color="#e8e8ee"/></linearGradient>
<filter id="fb"><feGaussianBlur stdDeviation=".55"/></filter>
</defs>
<g filter="url(#fb)">
<!-- panel a -->
<rect x="20.500" y="9.500" width="95" height="86" fill="#fff" stroke="#999" stroke-width=".6"/>
<g stroke="#d8d8d8" stroke-width=".5"><path d="M24 9.500 V95.500 M41 9.500 V95.500 M59 9.500 V95.500 M76 9.500 V95.500 M94 9.500 V95.500 M111 9.500 V95.500 M20.500 18 H115.500 M20.500 36.500 H115.500 M20.500 55 H115.500 M20.500 74 H115.500 M20.500 92 H115.500"/></g>
<path d="M24 92 C46 92 62 78 78 58 C92 40 102 27 111 17" fill="none" stroke="#222" stroke-width=".9" stroke-dasharray="5 1"/>
<path d="M24 92 C50 91 80 86 111 80" fill="none" stroke="#556" stroke-width=".9" stroke-dasharray="3 1.500"/>
<path d="M24 92 C60 91.500 90 89 111 87" fill="none" stroke="#c03050" stroke-width=".8"/><path d="M24 92.500 L111 91.500" fill="none" stroke="#c060c0" stroke-width=".7"/>
<g fill="#111"><rect x="49" y="70.500" width="2.400" height="3.400"/><rect x="75" y="37.500" width="2.400" height="3.600"/><rect x="101.500" y="16" width="2.400" height="4"/><path d="M50.200 69 V75.500 M76.200 35 V43 M102.700 13 V23" stroke="#111" stroke-width=".5"/></g>
<text x="4" y="6.500" font-size="5" font-weight="700" fill="#222">a</text><text x="120" y="6.500" font-size="5" font-weight="700" fill="#222">b</text><text x="4" y="119" font-size="5" font-weight="700" fill="#222">c</text>
<g font-size="4.200" fill="#333"><text x="10" y="20">0.4</text><text x="10" y="57">0.2</text><text x="14" y="94">0</text><text x="23" y="102">0</text><text x="57" y="102">4</text><text x="92" y="102">8</text><text x="66" y="106">λ</text>
<text x="121" y="25">12</text><text x="123" y="48">8</text><text x="123" y="70">4</text><text x="123" y="94">0</text><text x="126" y="102">0.2</text><text x="167" y="102">0.03</text><text x="201" y="102">1.0</text><text x="236" y="102">1.4</text><text x="188" y="106">λ</text></g>
<text transform="translate(7.500 76) rotate(-90)" font-size="4.200" fill="#222">Order parameter Φ</text>
<!-- panel b -->
<rect x="127" y="9.500" width="135" height="86" fill="url(#pb)" stroke="#889" stroke-width=".5"/>
<text x="139" y="19" font-size="4.500" fill="#f6e0e0">SP</text><text x="246" y="19" font-size="4.500" fill="#d8d8f4">NP</text>
<rect x="161" y="24.500" width="6" height="49" fill="#d04a50"/><rect x="181" y="50.500" width="5.500" height="23" fill="#3a40c0"/><path d="M167 73.500 H181" stroke="#555" stroke-width=".4"/>
<text transform="translate(158 58) rotate(-90)" font-size="4" fill="#333">Entropy</text>
<path d="M133 16 C134 60 140 88 152 91 C170 92.500 220 92 256 92" fill="none" stroke="#111" stroke-width=".9" stroke-dasharray="2 1"/>
<path d="M133 92 L258 92" stroke="#c02040" stroke-width="1"/>
<g fill="#111"><circle cx="133.500" cy="16.500" r="1.300"/><circle cx="138" cy="67" r="1.300"/><circle cx="142.500" cy="80" r="1.300"/><circle cx="147" cy="87.500" r="1.300"/><circle cx="152" cy="90.500" r="1.300"/><circle cx="156.500" cy="91.500" r="1.300"/><circle cx="161" cy="91.800" r="1.300"/></g>
<g fill="#9a1030"><circle cx="173" cy="92" r="1.200"/><circle cx="189" cy="92" r="1.200"/><circle cx="208" cy="92" r="1.200"/><circle cx="226" cy="92" r="1.200"/><circle cx="133.500" cy="84.500" r="1.100"/><circle cx="138" cy="89" r="1.100"/></g>
<g fill="#2030c0"><circle cx="133.500" cy="77.500" r="1.200"/><circle cx="138" cy="87" r="1.200"/><circle cx="142.500" cy="89.500" r="1.200"/><circle cx="147" cy="91" r="1.200"/></g>
<path d="M139 76 L161 64 M186.500 73.500 L208 91" stroke="#eee" stroke-width=".5" stroke-dasharray="1.500 1"/>
<rect x="198" y="24" width="56.500" height="34.500" fill="#fff" stroke="#99a" stroke-width=".4"/>
<path d="M204 25 C205 44 212 54 222 55.500 C234 57 246 57 253 57.500" fill="none" stroke="#3a9a8a" stroke-width=".7"/><path d="M210 25 C211 48 214 57 222 57.500 L253 58" fill="none" stroke="#d060c0" stroke-width=".6"/><path d="M204.500 27 C206 46 213 55 224 56.500 L253 57.500" fill="none" stroke="#c03030" stroke-width=".6"/>
<g fill="#111"><circle cx="204.500" cy="26.500" r="1"/><circle cx="207" cy="41" r="1"/><circle cx="210" cy="44" r="1"/><circle cx="217.500" cy="50.500" r="1"/><circle cx="227" cy="52" r="1"/><circle cx="238.500" cy="53" r="1"/><circle cx="250" cy="54.500" r="1"/></g>
<text x="220" y="30" font-size="3.800" fill="#3a9a8a">Exp. squeezing</text><text x="213" y="37.500" font-size="3.600" fill="#c03070">N → ∞, Ω/ω → ∞</text>
<g font-size="3.600" fill="#333"><text x="188" y="36">0.06</text><text x="194" y="59">0</text><text x="200" y="64">0.4</text><text x="213" y="64">0.63</text><text x="246" y="64">1.2</text></g>
<!-- legend -->
<rect x="19.500" y="105.500" width="242" height="7" fill="none" stroke="#bbb" stroke-width=".4" stroke-dasharray="1 1"/>
<g font-size="4" fill="#444" font-family="'Liberation Serif',serif"><text x="39" y="111">Ω/ω = 5</text><text x="98" y="111">Ω/ω = 25</text><text x="155" y="111">Ω/ω = 50</text><text x="213" y="111">N → ∞, Ω/ω → ∞</text></g>
<path d="M24 109 H34 M82 109 H92 M139 109 H149" stroke="#555" stroke-width=".4" stroke-dasharray="1.500 1"/><rect x="28" y="107.300" width="1.800" height="3.400" fill="#111"/><rect x="86" y="107.300" width="1.800" height="3.400" fill="#2030c0"/><rect x="143" y="107.300" width="1.800" height="3.400" fill="#b01030"/><path d="M198 109 H208" stroke="#d8a0d8" stroke-width=".5"/>
<!-- panel c : 3D surfaces -->
<g>
<path d="M18 128 L64 114 L96 131 L44 147 Z" fill="url(#pl)"/><path d="M96 130 L146 115 L177 131 L124 148 Z" fill="url(#pl)"/><path d="M174 130 L222 116 L260 132 L206 149 Z" fill="url(#pl)"/>
<path d="M36 131 C38 124 41 124 43 131 Z" fill="url(#pk)"/><path d="M50 132 C52 115 57 115 59 132 Z" fill="url(#pk)"/><path d="M66 128 C68 117 72 117 74 128 Z" fill="url(#pk)"/><path d="M36 134 L70 130 L60 138 Z" fill="#e8eef4" opacity=".8"/>
<path d="M114 133 C116 123 120 123 122 133 Z" fill="url(#pk)"/><path d="M128 133 C131 113 136 113 139 133 Z" fill="url(#pk)"/><path d="M143 130 C146 116 150 116 153 130 Z" fill="url(#pk)"/><path d="M116 137 L150 131 L140 139 Z" fill="#e8eef4" opacity=".7"/>
<path d="M206 137 C214 130 218 116 223 116 C228 116 232 130 241 135 Z" fill="url(#pk)"/><path d="M214 139 L238 134 L232 140 Z" fill="#f4f6f8" opacity=".8"/>
</g>
<rect x="9.500" y="135" width="3.400" height="24" fill="url(#cb)"/><text x="7" y="133.500" font-size="3.400" fill="#a33">0.15</text><text x="7" y="163" font-size="3.400" fill="#35a">-0.1</text>
<g font-size="4.600" font-family="'Liberation Serif',serif"><text x="25" y="156" fill="#b03040">λ̄ = 0.2</text><text x="101" y="155" fill="#b03040">λ̄ = 0.3</text><text x="186" y="155" fill="#556">λ̄ = 1</text></g>
<path d="M51 151 L55 151 L53 156 Z" fill="#111"/>
<!-- flat maps -->
<path d="M18 163 L62 152 L96 165 L48 178 Z" fill="#c4d2e8"/><path d="M96 163 L143 152 L177 166 L128 178 Z" fill="#c4d2e8"/><path d="M175 163 L222 152 L260 166 L210 179 Z" fill="#c4d2e8"/>
<ellipse cx="53" cy="164.500" rx="2.500" ry=".8" fill="#7d86b8" transform="rotate(-14 53 164.500)"/><ellipse cx="37" cy="168.500" rx="2.500" ry=".7" fill="#e8a090" transform="rotate(-14 37 168.500)"/>
<ellipse cx="118" cy="168.500" rx="4.500" ry="1.400" fill="#d83a30" transform="rotate(-14 118 168.500)"/><ellipse cx="134" cy="164" rx="5" ry="1.200" fill="#6a5ab0" transform="rotate(-14 134 164)"/><ellipse cx="150" cy="160" rx="4.500" ry="1.300" fill="#e0705a" transform="rotate(-14 150 160)"/>
<ellipse cx="210" cy="165.500" rx="9.500" ry="3.200" fill="#f0b8a0" transform="rotate(-14 210 165.500)"/><ellipse cx="210" cy="165.500" rx="7" ry="2" fill="#c8181c" transform="rotate(-14 210 165.500)"/>
<g stroke="#777" stroke-width=".5"><path d="M18 163 l-1.500 1.500 M24 165 l-1.500 1.500 M30 168 l-1.500 1.500 M36 171 l-1.500 1.500 M42 174.500 l-1.500 1.500 M48 178 l0 2 M58 175.500 l1 2 M68 172.500 l1 2 M78 170 l1 2 M88 167 l1 2 M96 165 l1.500 1.500"/><path d="M96 163 l-1.500 1.500 M103 166 l-1.500 1.500 M110 169 l-1.500 1.500 M116 172 l-1.500 1.500 M122 175 l-1.500 1.500 M128 178 l0 2 M138 175.500 l1 2 M148 173 l1 2 M158 170.500 l1 2 M168 168 l1 2 M177 166 l1.500 1.500"/><path d="M175 163 l-1.500 1.500 M182 166 l-1.500 1.500 M189 169.500 l-1.500 1.500 M196 173 l-1.500 1.500 M203 176 l-1.500 1.500 M210 179 l0 2 M220 176.500 l1 2 M230 174 l1 2 M240 171.500 l1 2 M250 169 l1 2 M260 166 l1.500 1.500"/></g>
<g font-size="4.200" font-weight="700" fill="#333"><text x="26" y="181">p</text><text x="73" y="181">x</text><text x="106" y="181">p</text><text x="153" y="181">x</text><text x="186" y="181">p</text><text x="236" y="181">x</text></g>
</g>
</svg>
</div>
 <div class="t" style="left:118px;top:306.500px;width:213.500px;height:26.500px;background:#e92a1c;color:#fff;font-size:16.200px;font-weight:700;line-height:26px;text-align:center;letter-spacing:.1px">图4 超辐射过程的强度与相变</div>
 <!-- photo -->
 <div class="abs" style="left:56.500px;top:349.500px;width:337.500px;height:104px;background:#020203;box-shadow:0 2px 5px rgba(30,20,40,.5);overflow:hidden"><svg width="338" height="104" viewBox="0 0 338 104" style="position:absolute;left:0;top:0">
<defs><linearGradient id="bx1" x1="0" y1="0" x2="1" y2="1"><stop offset="0" stop-color="#c8cacc"/><stop offset=".5" stop-color="#eceeee"/><stop offset="1" stop-color="#9a9c9e"/></linearGradient>
<linearGradient id="bx2" x1="0" y1="0" x2="1" y2="0"><stop offset="0" stop-color="#b6b8ba"/><stop offset=".45" stop-color="#f4f4f4"/><stop offset="1" stop-color="#c6c8ca"/></linearGradient>
<linearGradient id="bx3" x1="0" y1="0" x2="0" y2="1"><stop offset="0" stop-color="#a8aaac"/><stop offset="1" stop-color="#707274"/></linearGradient>
<linearGradient id="fbr" x1="0" x2="1"><stop offset="0" stop-color="#c8c8c8"/><stop offset=".45" stop-color="#e8e8e0"/><stop offset=".55" stop-color="#444"/><stop offset="1" stop-color="#222"/></linearGradient>
<filter id="pbl"><feGaussianBlur stdDeviation=".5"/></filter><filter id="pbl2" x="-200%" y="-200%" width="500%" height="500%"><feGaussianBlur stdDeviation="2"/></filter></defs>
<rect width="338" height="104" fill="#020204"/>
<path d="M239 0 L338 0 L338 90 L258 90 Q239 88 239 70 Z" fill="#2f78b4"/>
<ellipse cx="250" cy="93" rx="4" ry="8" fill="#f0603c" filter="url(#pbl2)"/><ellipse cx="262" cy="97" rx="10" ry="3" fill="#7a3a8a" filter="url(#pbl2)" opacity=".5"/>
<g filter="url(#pbl)">
<path d="M0 71.500 L2 70.500 L57 103 L51 104 Z" fill="#a8aaae" opacity=".85"/>
<path d="M8 91 C30 82 50 72 82 68" fill="none" stroke="#d4d4d0" stroke-width="2.200" stroke-linecap="round"/>
<path d="M82 68 C100 65 118 62 134 59" fill="none" stroke="#3a3a34" stroke-width="1.600"/><path d="M134 59 L168 54" fill="none" stroke="#a8a830" stroke-width="1.400"/>
<rect x="126" y="58" width="5" height="3.500" fill="#8aa0a0"/><rect x="99" y="63.500" width="2" height="2" fill="#ddd"/>
<path d="M132 53.500 L159 49.500" stroke="#d82a2a" stroke-width="2.600" stroke-linecap="round" opacity=".9"/>
<!-- base plate -->
<path d="M172 63 L191 50 L296 58 L193 86 Z" fill="#c4c6c8"/><path d="M172 63 L193 86 L193 89 L172 66 Z" fill="#8a8c8e"/><path d="M193 86 L296 58 L296 61 L193 89 Z" fill="#e8eaea"/>
<circle cx="181" cy="63.500" r="1.800" fill="#777"/><circle cx="194" cy="80" r="1.800" fill="#777"/>
<!-- connector -->
<path d="M168 45.500 L198 36 L200 48 L170 59 Z" fill="#d0d2d4"/><ellipse cx="199" cy="42" rx="4.500" ry="8" fill="#b4b6b8" transform="rotate(-15 199 42)"/>
<!-- box -->
<path d="M186 23.500 L212 39 L216 78 L191 50 Z" fill="url(#bx3)"/>
<path d="M212 39 L298 21.500 L298 50 L216 78 Z" fill="url(#bx2)"/>
<path d="M186 23.500 L246 8.500 L298 21.500 L212 39 Z" fill="url(#bx1)"/>
<path d="M224 20 L262 12" stroke="#888" stroke-width=".8"/>
<!-- pins -->
<g stroke="#18181a" stroke-width="1.500" stroke-linecap="round"><path d="M224 51.500 L260 77"/><path d="M235 49 L273 74.500"/><path d="M245 47 L285 70.500"/><path d="M255.500 44 L298 67"/><path d="M265.500 42 L309 63"/><path d="M275.500 39.500 L320 60.500"/><path d="M285 37.500 L331 58"/></g>
<circle cx="224" cy="51.500" r="1.600" fill="#a02020"/><circle cx="235" cy="49" r="1.600" fill="#a02020"/><circle cx="245" cy="47" r="1.300" fill="#333"/><circle cx="255.500" cy="44" r="1.300" fill="#333"/><circle cx="265.500" cy="42" r="1.300" fill="#333"/><circle cx="275.500" cy="39.500" r="1.300" fill="#333"/><circle cx="285" cy="37.500" r="1.300" fill="#333"/>
</g>
</svg>
</div>
 <div class="t" style="left:158px;top:473px;font-size:13.200px;font-weight:500;color:#2e2e30;letter-spacing:.15px">图3 超辐射光纤激光器</div>
 <!-- right text -->
 <div class="t" style="left:439px;top:109.500px;font-size:19.900px;font-weight:900;color:#111;letter-spacing:.1px;word-spacing:3px"><span style="font-family:'DejaVu Sans',sans-serif;font-weight:700;font-size:21px;margin-right:-1.500px;display:inline-block;transform:scaleY(1.450);transform-origin:50% 58%">➢</span>超辐射（SR） 解释清楚</div>
 <div class="t b" style="left:439.500px;top:144.500px">多个粒子在一起时产生的一种相干自发辐射</div>
 <div class="t b" style="left:472.500px;top:223px">•<span style="display:inline-block;width:8.200px"></span>来源于强偶极-偶极相互作用</div>
 <div class="t b" style="left:472.500px;top:258.500px">•<span style="display:inline-block;width:8.200px"></span>超辐射的最大特性——光强与N<span style="font-size:12px;vertical-align:6px">2</span>成正比</div>
 <div class="t b" style="left:515.500px;top:336px">•<span style="display:inline-block;width:8.200px"></span>已经应用于强发光激光器、发光二极管中</div>
 <div class="t b" style="left:515.500px;top:372px">•<span style="display:inline-block;width:8.200px"></span>理论研究已经趋于成熟</div>
 <svg class="abs" style="left:573px;top:458px" width="64" height="23" viewBox="0 0 64 23"><path d="M1 6.500 L33 6.500 L29 .5 L63 11.500 L29 22.500 L33 16.500 L1 16.500 Z" fill="#c9160c"/></svg>
 <div class="t" style="left:622px;top:447.500px;width:300px;text-align:center;font-size:19.200px;font-weight:900;color:#c61a10;letter-spacing:0">超辐射同样可以增强发光</div>
 <div class="t" style="left:622px;top:473.500px;width:300px;text-align:center;font-size:19.200px;font-weight:900;color:#c61a10;letter-spacing:.1px">且已经有了很多应用</div>
 <!-- cursor -->
 <svg class="abs" style="left:365px;top:442px" width="20" height="28" viewBox="0 0 20 28"><path d="M1.500 1.500 L1.500 21 L6 16.800 L9.500 25 L13 23.500 L9.500 15.500 L15.800 15.500 Z" fill="#1a1a1a" stroke="#fff" stroke-width="1.600" stroke-linejoin="round"/></svg>
</div>
</div>
    <div id="panel" class="abs"><style>
#panel .x{position:absolute;white-space:nowrap;line-height:22px;font-size:16px;color:#2a242c}
#panel .bd{font-weight:700;font-size:16.200px;color:#2a242c}
#panel .sep{position:absolute;left:20px;width:320px;height:1px;background:#dcd4dd}
#panel .cb{position:absolute;left:24px;width:17.300px;height:17.300px;margin-top:.3px;border-radius:4.500px;background:#fbf9fb;box-shadow:0 0 0 .5px rgba(90,70,100,.25),0 1px 1.500px rgba(60,40,70,.22)}
#panel .sw{position:absolute;width:80.500px;height:47.500px;border-radius:5px;overflow:hidden}
#panel .dot{position:absolute;top:570.500px;width:6px;height:6px;border-radius:50%;background:#cbc3cd}
.stp{position:absolute;top:709px;width:17px;height:23px}
</style>
<div class="abs" style="left:-2px;top:0;width:1.500px;height:989px;background:#d6cdd8"></div>
<div class="x" style="left:0;width:360px;top:8px;text-align:center;color:#8b838f;font-size:16.500px">幻灯片</div>
<div class="abs" style="left:0;top:35px;width:361px;height:1px;background:#dbd3dc"></div>
<!-- layout card -->
<div class="abs" style="left:14px;top:51.500px;width:332px;height:96px;border-radius:7px;background:#fcfafc;box-shadow:0 0 1px rgba(100,80,110,.2)">
 <div class="abs" style="left:9px;top:17.500px;width:103.500px;height:60.500px;background:linear-gradient(180deg,#d7f0f8 0%,#dcf2f9 40%,#f4fbfd 58%,#fff 70%);box-shadow:0 1px 2.500px rgba(40,40,60,.45);border-radius:1px;overflow:hidden">
  <div class="abs" style="left:-5px;top:30px;width:60px;height:20px;border-radius:50%;background:rgba(255,255,255,.9);filter:blur(3px)"></div><div class="abs" style="left:45px;top:26px;width:70px;height:24px;border-radius:50%;background:rgba(255,255,255,.95);filter:blur(3px)"></div>
  <div class="abs" style="left:6px;top:22.500px;font-size:6.200px;font-weight:900;color:#1c2430;line-height:8px;white-space:nowrap">演示文稿标题</div>
  <div class="abs" style="left:6px;top:32.300px;font-size:3.400px;font-weight:700;color:#1c2430;line-height:5px;white-space:nowrap">演示文稿副标题</div>
  <div class="abs" style="left:6px;top:50.500px;font-size:2.800px;color:#334;line-height:4px;white-space:nowrap">作者和日期</div>
 </div>
 <div class="x" style="left:121.500px;top:26.500px;color:#8b838f;font-size:16px">幻灯片布局</div>
 <div class="x bd" style="left:121.500px;top:49px">标题</div>
 <svg class="abs" style="left:301.500px;top:44.500px" width="16" height="10" viewBox="0 0 16 10"><path d="M1.500 1.500 L8 8 L14.500 1.500" fill="none" stroke="#5c5460" stroke-width="2"/></svg>
</div>
<div class="sep" style="top:163px"></div>
<div class="x bd" style="left:21.500px;top:183.500px">外观</div>
<div class="cb" style="top:220.500px"></div><div class="x" style="left:50.500px;top:218.500px">标题</div>
<div class="cb" style="top:253.500px"></div><div class="x" style="left:50.500px;top:251.500px">正文</div>
<div class="cb" style="top:287px"></div><div class="x" style="left:50.500px;top:285px">幻灯片编号</div>
<div class="sep" style="top:322px"></div>
<div class="x bd" style="left:21.500px;top:342.500px">背景</div>
<div class="abs" style="left:20.500px;top:379.500px;width:319px;height:28.500px;border-radius:7px;background:#e3dce4;box-shadow:inset 0 0 1px rgba(80,60,90,.25)"></div>
<div class="abs" style="left:180px;top:381px;width:158px;height:25.500px;border-radius:6px;background:#fdfcfd;box-shadow:0 1px 2px rgba(60,40,70,.3)"></div>
<div class="x" style="left:70px;width:60px;text-align:center;top:382px;font-size:17px">标准</div>
<div class="x" style="left:229px;width:60px;text-align:center;top:382px;font-size:17px">动态</div>
<!-- swatches -->
<div class="sw" style="left:41px;top:430.500px;background:linear-gradient(62deg,#0ee6d4 0%,#14e6b0 24%,#38e472 44%,#a4e040 62%,#f4c02e 80%,#f8863c 100%)"><div style="position:absolute;left:26px;top:-22px;width:26px;height:92px;background:rgba(255,255,255,.16);transform:rotate(-52deg)"></div></div>
<div class="sw" style="left:137.500px;top:430.500px;background:linear-gradient(180deg,#0a0814 0%,#0c0a1e 45%,#141458 62%,#1a1a78 78%,#0c0c34 100%)"><div style="position:absolute;left:-5px;top:18px;width:95px;height:14px;border-radius:50%;background:#0b0918"></div></div>
<div class="sw" style="left:233.500px;top:430.500px;background:linear-gradient(118deg,#0b30d8 0%,#1040e8 38%,#2c64f4 52%,#1038e0 66%,#0a2cd4 100%)"></div>
<div class="sw" style="left:41px;top:500.500px;background:linear-gradient(180deg,#d5f0f8 0%,#daf2f9 45%,#f6fbfd 62%,#fff 75%)"><div style="position:absolute;left:30px;top:18px;width:60px;height:18px;border-radius:50%;background:#fff;filter:blur(2.500px)"></div></div>
<div class="sw" style="left:137.500px;top:500.500px;background:linear-gradient(150deg,#f83af0 0%,#e83cf0 30%,#b44af0 62%,#7a52f0 100%)"></div>
<div class="sw" style="left:233.500px;top:500.500px;background:#0a2a50"><svg width="81" height="48" viewBox="0 0 81 48" style="position:absolute;left:0;top:0"><defs><linearGradient id="mt" x1="0" y1="0" x2="0" y2="1"><stop offset="0" stop-color="#2ee6b0"/><stop offset="1" stop-color="#18c8a0"/></linearGradient></defs><rect width="81" height="48" fill="#0a2450"/><path d="M0 22 L6 19 L12 23 L20 17 L26 20 L34 15 L40 19 L48 14 L54 18 L62 13 L70 16 L81 12 L81 48 L0 48 Z" fill="url(#mt)"/><path d="M28 48 C30 34 40 28 52 22 C62 17 72 18 81 14 L81 48 Z" fill="#9ed8d4" opacity=".85"/><path d="M0 30 C8 26 14 34 22 48 L0 48 Z" fill="#14b090" opacity=".8"/></svg></div>
<svg class="abs" style="left:18.500px;top:491px" width="10" height="15" viewBox="0 0 10 15"><path d="M8 1.500 L2 7.500 L8 13.500" fill="none" stroke="#6e6672" stroke-width="1.700"/></svg>
<svg class="abs" style="left:332.500px;top:491px" width="10" height="15" viewBox="0 0 10 15"><path d="M2 1.500 L8 7.500 L2 13.500" fill="none" stroke="#6e6672" stroke-width="1.700"/></svg>
<div class="dot" style="left:151.500px;background:#6c6470"></div><div class="dot" style="left:168.500px"></div><div class="dot" style="left:185.500px"></div><div class="dot" style="left:203px"></div>
<div class="x" style="left:22px;top:604px;font-size:17.500px;font-weight:500;color:#2a242c">预览动画</div>
<div class="abs" style="left:287px;top:599px;width:52px;height:30px;border-radius:15px;background:#186cf4"><div style="position:absolute;right:1.500px;top:1.500px;width:27px;height:27px;border-radius:50%;background:#fff;box-shadow:0 1px 2px rgba(0,0,0,.3)"></div></div>
<div class="sep" style="top:638.500px"></div>
<div class="x bd" style="left:21.500px;top:652.500px">颜色</div>
<div class="abs" style="left:34px;top:686.500px;width:292px;height:27.500px;background:linear-gradient(90deg,#b6c1ee 0%,#bcb8d8 14%,#c4a9b0 33%,#d892a4 50%,#e2709a 66%,#b890b0 82%,#57c1c9 100%);box-shadow:0 0 1px rgba(0,0,0,.3)"></div>
<svg class="stp" style="left:25.500px"><path d="M8.500 .5 L16 7 L16 22 L1 22 L1 7 Z" fill="#f6f2f6" stroke="#bbb3bd" stroke-width=".8"/><rect x="3" y="9" width="11" height="11" fill="#b6c1ee" stroke="#8c92b8" stroke-width=".6"/></svg>
<svg class="stp" style="left:123.500px"><path d="M8.500 .5 L16 7 L16 22 L1 22 L1 7 Z" fill="#f6f2f6" stroke="#bbb3bd" stroke-width=".8"/><rect x="3" y="9" width="11" height="11" fill="#c4a9b0" stroke="#94808a" stroke-width=".6"/></svg>
<svg class="stp" style="left:220px"><path d="M8.500 .5 L16 7 L16 22 L1 22 L1 7 Z" fill="#f6f2f6" stroke="#bbb3bd" stroke-width=".8"/><rect x="3" y="9" width="11" height="11" fill="#e0648e" stroke="#aa4c6c" stroke-width=".6"/></svg>
<svg class="stp" style="left:318px"><path d="M8.500 .5 L16 7 L16 22 L1 22 L1 7 Z" fill="#f6f2f6" stroke="#bbb3bd" stroke-width=".8"/><rect x="3" y="9" width="11" height="11" fill="#4cc0c8" stroke="#3a949a" stroke-width=".6"/></svg>
<div class="sep" style="top:752px"></div>
<div class="x bd" style="left:21.500px;top:776px">背景颜色</div>
<div class="abs" style="left:252px;top:772px;width:87px;height:28.500px;border-radius:6.500px;background:#fdfcfd;box-shadow:0 0 0 .5px rgba(90,70,100,.22),0 1px 2px rgba(60,40,70,.25)"><div style="position:absolute;left:58.500px;top:2px;width:1px;height:24.500px;background:#e6e0e7"></div><div style="position:absolute;left:63.500px;top:4.500px;width:19px;height:19px;border-radius:50%;background:conic-gradient(#f04a4a,#f0a030,#e8e040,#50d060,#40c0e0,#5060f0,#c050e0,#f04a8a,#f04a4a)"><div style="position:absolute;left:3.500px;top:3.500px;width:12px;height:12px;border-radius:50%;background:radial-gradient(#fff 35%,rgba(255,255,255,0) 100%)"></div></div></div>
<div class="sep" style="top:820px"></div>
<div class="x bd" style="left:21.500px;top:838px">速度</div>
<div class="abs" style="left:20.500px;top:874px;width:190px;height:4px;border-radius:2px;background:#186cf4"></div>
<div class="abs" style="left:201.500px;top:865.500px;width:21px;height:21px;border-radius:50%;background:#fff;box-shadow:0 0 0 .5px rgba(0,0,0,.12),0 1px 3px rgba(0,0,0,.35)"></div>
<div class="abs" style="left:241.500px;top:863px;width:75.500px;height:27px;background:#fefdfe;box-shadow:0 0 0 .5px rgba(90,70,100,.25),0 1px 1.500px rgba(60,40,70,.2)"></div>
<div class="x" style="left:241.500px;top:865px;width:70.500px;text-align:right;font-size:17px;color:#1c161e">100</div>
<div class="abs" style="left:322.500px;top:863.500px;width:17px;height:27px;border-radius:5px;background:#fdfcfd;box-shadow:0 0 0 .5px rgba(90,70,100,.22),0 1px 2px rgba(60,40,70,.25)"><svg width="17" height="27" viewBox="0 0 17 27"><path d="M4.500 10 L8.500 5.500 L12.500 10 M4.500 17 L8.500 21.500 L12.500 17" fill="none" stroke="#3c3440" stroke-width="1.800"/></svg></div>
<div class="sep" style="top:900px"></div>
<div class="abs" style="left:46.500px;top:931px;width:267.500px;height:27px;border-radius:6px;background:#fdfcfd;box-shadow:0 0 0 .5px rgba(90,70,100,.2),0 1px 2px rgba(60,40,70,.25)"></div>
<div class="x" style="left:46.500px;top:933px;width:267.500px;text-align:center;font-size:16.300px">编辑幻灯片布局</div>
</div>
  </div>
  <div id="bottomstrip" class="abs"></div>
  <div class="abs" style="left:1569px;top:713px;width:31px;height:78px;border-radius:7px 0 0 7px;background:rgba(62,60,64,.84)"><svg width="31" height="78" viewBox="0 0 31 78"><path d="M11 29 L22 39.200 L11 49.500" fill="none" stroke="#bab8bc" stroke-width="2.300"/></svg></div>
<div class="abs" style="left:24px;top:1276px;width:275px;height:58.500px;border-radius:8px;background:rgba(15,16,18,.6)"></div>
<svg class="abs" style="left:40px;top:1288px" width="34" height="34" viewBox="0 0 34 34"><circle cx="17" cy="17" r="16" fill="#fff"/><circle cx="11.500" cy="12.500" r="2.300" fill="#3c3a40"/><circle cx="22.500" cy="12.500" r="2.300" fill="#3c3a40"/><path d="M6.500 18.500 L27.500 18.500 C27 25 22.500 28.500 17 28.500 C11.500 28.500 7 25 6.500 18.500 Z" fill="#3c3a40"/></svg>
<div class="abs" style="left:84.500px;top:1286px;width:1px;height:38px;background:rgba(255,255,255,.3)"></div>
<div class="abs" style="left:111px;top:1288px;font-size:24px;line-height:36px;color:#dedce0;white-space:nowrap;font-weight:300">说点什么...</div>
<div class="abs" style="left:242.500px;top:1286px;width:1px;height:38px;background:rgba(255,255,255,.3)"></div>
<svg class="abs" style="left:262px;top:1295px" width="16" height="22" viewBox="0 0 16 22"><path d="M12.500 2 L4 11 L12.500 20" fill="none" stroke="#f4f4f4" stroke-width="2.800"/></svg>

</div>
<div id="right" class="abs"><style>
#topbtn{left:116px;top:5px;width:142px;height:39px;border-radius:5px;background:rgba(28,29,31,.82)}
.card{position:absolute;left:16px;width:326px;height:183px;border-radius:5px;border:1px solid rgba(120,124,130,.55);background:rgba(70,73,78,.35)}
.card .in{position:absolute;left:3px;top:3px;right:3px;bottom:3px;background:#232426}
.card.spk{border-color:#1fc35a}
.av{position:absolute;left:113px;top:27.500px;width:98px;height:98px;border-radius:50%;overflow:hidden}
.av svg{display:block}
.lab{position:absolute;left:3px;bottom:3px;height:43px;background:#0d0d0e;color:#fff;font-size:20.6px;line-height:43px;white-space:nowrap;font-weight:300}
.lab svg{position:absolute}
.lab b{position:absolute;font-weight:300;top:.5px}
</style>
<div id="topbtn" class="abs"><svg width="142" height="39" viewBox="0 0 142 39"><path d="M59.5 24.5 L70.5 13.5 L81.5 24.5" fill="none" stroke="#9a9a9a" stroke-width="2.6"/></svg></div>
<svg width="0" height="0" style="position:absolute">
<defs>
<g id="mic"><rect x="6.5" y="0" width="12" height="20" rx="6" fill="#fff"/><path d="M1.5 11.5 A11 11 0 0 0 23.500 11.500" fill="none" stroke="#fff" stroke-width="2.8"/><rect x="11" y="22" width="3" height="5.500" fill="#fff"/></g>
<g id="micm"><rect x="7" y="1" width="11" height="18" rx="5.500" fill="#fff"/><path d="M2.500 11.500 A10 10 0 0 0 22.500 11.500" fill="none" stroke="#fff" stroke-width="2.500"/><rect x="11" y="21" width="3" height="5" fill="#fff"/><path d="M1 24 L24 1" stroke="#0d0d0e" stroke-width="6"/><path d="M1.500 24.500 L24.500 1.500" stroke="#f0524a" stroke-width="2.600"/></g>
<g id="user"><circle cx="20" cy="12.300" r="6" fill="#fff"/><path d="M6.500 34 C6.500 26.500 10.500 22.500 15.300 20.800 L20 25.300 L24.700 20.800 C29.500 22.500 33.500 26.500 33.500 34 Z" fill="#fff"/></g>
</defs></svg>

<!-- card 1 -->
<div class="card" style="top:164px"><div class="in"></div>
 <div class="av"><svg width="98" height="98" viewBox="0 0 98 98"><rect width="98" height="98" fill="#ffd079"/>
<path d="M19 98 C18 88 22 80 25 72 L72 72 C76 80 80 88 80 98 Z" fill="#fba496" stroke="#2a1a1a" stroke-width=".7"/>
<path d="M14 70 L24 82 L28 72 L20 64 Z" fill="#fba496"/><path d="M84 72 L76 84 L71 74 L78 66 Z" fill="#fba496"/>
<ellipse cx="14.500" cy="64" rx="8.500" ry="9" fill="#d25a5e" stroke="#2a1a1a" stroke-width=".8" transform="rotate(-20 14.500 64)"/>
<ellipse cx="22" cy="60" rx="2.800" ry="3.500" fill="#d25a5e" stroke="#2a1a1a" stroke-width=".7"/>
<ellipse cx="83" cy="66.500" rx="8.500" ry="9.500" fill="#d25a5e" stroke="#2a1a1a" stroke-width=".8" transform="rotate(20 83 66.500)"/>
<ellipse cx="75.500" cy="63" rx="2.800" ry="3.500" fill="#d25a5e" stroke="#2a1a1a" stroke-width=".7"/>
<path d="M26 52 C26 47 30 45 36 46 L63 46 C69 45 73 48 72 53 C75 60 75 68 72 74 L26 74 C23 68 23 59 26 52 Z" fill="#fba496" stroke="#2a1a1a" stroke-width=".7"/>
<path d="M28 55 C29 52 32 51 34 53" fill="none" stroke="#2a1a1a" stroke-width=".7"/><path d="M65 53 C67 52 69 53 70 55" fill="none" stroke="#2a1a1a" stroke-width=".7"/>
<path d="M33.500 46.500 C36 38 44 32 50 31.500 C56 32 62 39 63.500 46.500 Z" fill="#151b40" stroke="#0a0a18" stroke-width=".7"/>
<path d="M31 49 C31 44 38 46.500 48 47 C58 46.500 65 43.500 65.500 48.500 C65 52 57 53 48 53 C39 53 31.500 52.500 31 49 Z" fill="#fff" stroke="#1a1a1a" stroke-width=".8"/>
<circle cx="50" cy="29.500" r="3" fill="#fff" stroke="#1a1a1a" stroke-width=".8"/>
<circle cx="38" cy="62.500" r="1.400" fill="#111"/><path d="M57 62 C58.500 63.500 60.500 63.500 62 62" fill="none" stroke="#111" stroke-width=".9"/>
<rect x="41.500" y="62.500" width="13" height="7" rx="3.500" fill="#f9b3c6" stroke="#2a1a1a" stroke-width=".7"/><rect x="45" y="64.500" width="1.600" height="3.500" rx=".8" fill="#e77a98"/><rect x="49.500" y="64.500" width="1.600" height="3.500" rx=".8" fill="#e77a98"/>
<path d="M22.500 69 C38 72 58 72 73 68.500 L74 76 C58 80 38 80 23.500 76.500 Z" fill="#b9bcc6" stroke="#2a1a1a" stroke-width=".7"/>
<path d="M27 70 L28 77.500" stroke="#f4c63a" stroke-width="1.600"/><path d="M30 70.500 L31 78" stroke="#e8665e" stroke-width="1.400"/><path d="M39 71.500 L39.500 79" stroke="#f4c63a" stroke-width="1.800"/><path d="M42 71.500 L42.500 79" stroke="#e8665e" stroke-width="1.300"/><path d="M52 71.500 L52 79" stroke="#f4c63a" stroke-width="1.800"/><path d="M55 71.500 L55 79" stroke="#e8665e" stroke-width="1.300"/><path d="M63 70.500 L63.500 78" stroke="#f4c63a" stroke-width="1.600"/><path d="M66.500 70 L67 77.500" stroke="#e8665e" stroke-width="1.400"/>
<path d="M68.500 75 L74.500 73.500 L79 90 L72 94 Z" fill="#b9bcc6" stroke="#2a1a1a" stroke-width=".7"/>
<path d="M70 80 L76.500 78" stroke="#f4c63a" stroke-width="1.500"/><path d="M70.500 82.500 L77 80.500" stroke="#e8665e" stroke-width="1.200"/><path d="M72 88.500 L78.500 86.500" stroke="#f4c63a" stroke-width="1.500"/><path d="M72.500 91 L79 88.500" stroke="#e8665e" stroke-width="1.200"/>
</svg>
</div>
 <div class="lab" style="width:251px">
  <svg style="left:2px;top:7px" width="29" height="29" viewBox="0 0 29 29"><rect x="0" y="1" width="28" height="20" rx="3.500" fill="#fff"/><path d="M6 27.500 L22.500 27.500 L21 24 L7.500 24 Z" fill="#fff"/><path d="M8 16 C9 11.500 12.500 9.500 16 9.500 L16 6.500 L21.500 11 L16 15.500 L16 12.500 C13 12.500 10.500 13 8 16 Z" fill="#0d0d0e"/></svg>
  <svg style="left:42px;top:8px" width="26" height="29" viewBox="0 0 26 29"><use href="#mic"/></svg>
  <b style="left:78px">赵一航的屏幕共享</b></div>
</div>
<!-- card 2 -->
<div class="card" style="top:363px"><div class="in"></div>
 <div class="av"><svg width="98" height="98" viewBox="0 0 98 98">
<defs><filter id="snw" x="0" y="0" width="100%" height="100%"><feTurbulence type="fractalNoise" baseFrequency=".22" numOctaves="3" seed="4"/><feColorMatrix values="0 0 0 0 0  0 0 0 0 0  0 0 0 0 0  2.600 0 0 0 -1.280"/><feComposite in2="SourceGraphic" operator="in"/></filter>
<filter id="snw2" x="0" y="0" width="100%" height="100%"><feTurbulence type="fractalNoise" baseFrequency=".08 .35" numOctaves="2" seed="9"/><feColorMatrix values="0 0 0 0 1  0 0 0 0 1  0 0 0 0 1  3 0 0 0 -1.300"/><feComposite in2="SourceGraphic" operator="in"/></filter></defs>
<rect width="98" height="98" fill="#dedede"/>
<rect width="98" height="60" fill="#2c2c2e" filter="url(#snw)"/>
<path d="M0 52 L40 60 L98 88 L98 98 L0 98 Z" fill="#1c1c1e"/>
<path d="M0 52 L40 60 L98 88 L98 98 L0 98 Z" fill="#fff" filter="url(#snw2)"/>
<path d="M40 45 L98 58 L98 86 L60 78 L38 62 Z" fill="#242426" opacity=".88"/>
<path d="M40 45 L98 58 L98 86 L60 78 L38 62 Z" fill="#eee" filter="url(#snw)" opacity=".55"/>
<g stroke="#b81410" stroke-linecap="butt">
<path d="M14 31 L14 48" stroke-width="1.200"/><path d="M18 32 L18 52" stroke-width="1.400"/><path d="M22 33 L22 54" stroke-width="1.400"/><path d="M26 34 L26 56" stroke-width="1.500"/><path d="M30 36 L30 58" stroke-width="1.600"/><path d="M36 39 L36 62" stroke-width="1.700"/><path d="M42.500 42 L42.500 67" stroke-width="1.900"/><path d="M49.500 44 L49.500 70" stroke-width="2.100"/><path d="M59 47 L59 75" stroke-width="2.300"/><path d="M69 51 L69 81" stroke-width="2.500"/><path d="M81 56 L81 86" stroke-width="2.700"/><path d="M95.500 60 L95.500 76" stroke-width="2.700"/>
<path d="M12 52 L76 92" stroke-width=".9"/>
<path d="M25 62 L25 74 M34 68 L34 80 M45 75 L45 90 M50 78 L50 96 M62 86 L62 97" stroke-width=".8" opacity=".8"/>
</g>
<g fill="#b81410"><path d="M38.500 41.500 L47 42.500 L46 44.500 L39.500 43.500 Z"/><path d="M45 43.500 L54.500 44.500 L53 47 L46.500 46 Z"/><path d="M53.500 46 L64.500 47.500 L63 50 L55 49 Z"/><path d="M63 49.500 L75 51.500 L73.500 54 L64.500 52.500 Z"/><path d="M74 54 L88 56 L86 59 L76 57.500 Z"/><path d="M87 57.500 L98 59 L98 62 L89 61 Z"/>
<path d="M2 48 L9 50 L9 66 L4 68 L1 62 Z"/></g>
<g fill="#f4f4f4"><path d="M5 26 L20 28 L34 32 L48 35.500 L60 38 L60 41.500 L48 39.500 L34 36 L20 32 L5 30 Z"/><path d="M60 38 L75 41 L75 46 L60 42 Z"/><path d="M74 40 L88 43 L88 49 L74 46 Z"/><path d="M88 43 L98 44.500 L98 52 L88 49.500 Z"/><path d="M0 36 L11 37 L11 45 L0 46 Z" fill="#e6e6e6"/></g>
<rect x="67.500" y="43.500" width="3" height="2.500" fill="#f09a50"/><rect x="79" y="45.500" width="3.500" height="3" fill="#f0b090"/>
</svg>
</div>
 <div class="lab" style="width:139px">
  <svg style="left:1px;top:1px" width="40" height="40" viewBox="0 0 40 40"><rect width="40" height="40" fill="#fa8a1e"/><use href="#user"/></svg>
  <svg style="left:53px;top:8px" width="26" height="28" viewBox="0 0 26 28"><use href="#micm"/></svg>
  <b style="left:90px">李欣</b></div>
</div>
<!-- card 3 -->
<div class="card" style="top:561.500px"><div class="in"></div>
 <div class="av"><svg width="98" height="98" viewBox="0 0 98 98">
<defs><filter id="ppr" x="0" y="0" width="100%" height="100%"><feTurbulence type="fractalNoise" baseFrequency=".5 .9" numOctaves="2" seed="3"/><feColorMatrix values="0 0 0 0 .45  0 0 0 0 .44  0 0 0 0 .46  1.400 0 0 0 -.55"/><feComposite in2="SourceGraphic" operator="in"/></filter></defs>
<rect width="98" height="98" fill="#cfcdd0"/><rect width="98" height="98" fill="#000" filter="url(#ppr)" opacity=".55"/>
<path d="M0 95 C30 89 70 89 98 95 L98 98 L0 98 Z" fill="#fff"/>
<g fill="none" stroke="#55545a" stroke-width=".7" opacity=".8"><path d="M0 40 C30 38 70 42 98 50"/><path d="M0 42 C30 41 70 45 98 53"/><path d="M44 0 C36 30 42 50 62 72 C68 80 72 86 74 92"/><path d="M52 0 C42 30 50 50 70 76"/><path d="M2 60 C12 40 24 24 40 8"/><path d="M30 4 C50 6 70 12 98 32"/><path d="M58 0 L40 40 M64 0 L46 40"/></g>
<g font-family="'DejaVu Sans','Liberation Sans',sans-serif" font-weight="400" fill="#111" font-size="29">
<text x="9.500" y="32" textLength="86" lengthAdjust="spacingAndGlyphs">You Only</text>
<text x="2.500" y="73" textLength="94" lengthAdjust="spacingAndGlyphs">Live Once</text></g>
</svg>
</div>
 <div class="lab" style="width:120px">
  <svg style="left:1px;top:1px" width="40" height="40" viewBox="0 0 40 40"><rect width="40" height="40" fill="#1677ff"/><use href="#user"/></svg>
  <svg style="left:53px;top:8px" width="26" height="28" viewBox="0 0 26 28"><use href="#micm"/></svg>
  <b style="left:90px">洋</b></div>
</div>
<!-- card 4 -->
<div class="card" style="top:760px"><div class="in"></div>
 <div class="av"><svg width="98" height="98" viewBox="0 0 98 98">
<defs><filter id="txl" x="0" y="0" width="100%" height="100%"><feTurbulence type="fractalNoise" baseFrequency=".12 .45" numOctaves="2" seed="7"/><feColorMatrix values="0 0 0 0 0  0 0 0 0 0  0 0 0 0 0  4.500 0 0 0 -2.950"/><feComposite in2="SourceGraphic" operator="in"/></filter></defs>
<rect width="48" height="98" fill="#96d73a"/><rect x="48" width="50" height="98" fill="#f8da34"/>
<rect x="46.500" width="2.500" height="98" fill="#c4d838" opacity=".7"/>
<rect y="10.500" width="98" height="1.500" fill="#f2f4e0"/>
<rect x="0" y="13" width="47" height="85" fill="#1f6a1c" filter="url(#txl)" opacity=".8"/>
<rect x="49" y="13" width="49" height="85" fill="#5a3408" filter="url(#txl)" opacity=".8"/>
<path d="M22 26 C26.500 25 29 29 28 33.500 C32 36 32.500 41 31.500 46 C32.500 52 31 58 29 64 C28 72 27 78 26 84 L21.500 84.500 C22 78 20.500 72 20 66 C18 60 16.500 54 17.500 48 C17 42 18 36 19.500 32 C19 29 19.500 27 22 26 Z" fill="#2e7a2a"/>
<path d="M21 78 L18 85 L20.500 85.500 L23 79 Z" fill="#2e7a2a"/>
<ellipse cx="70" cy="44" rx="10.500" ry="12" fill="#f05a1e" transform="rotate(-20 70 44)"/><circle cx="76" cy="33" r="4.500" fill="#f05a1e"/><path d="M62 52 L64 57 L72 56 L78 52 Z" fill="#f05a1e"/>
<circle cx="73.500" cy="41" r="1.300" fill="#f8da34"/><circle cx="76" cy="36.500" r="1" fill="#f8da34"/>
<path d="M53 0 L68 0 L66 4 L55 4 Z" fill="#f09a28"/><path d="M28 1 L38 1 L38 5 L28 5 Z" fill="#d6e838"/>
</svg>
</div>
 <div class="lab" style="width:118px">
  <svg style="left:11px;top:8px" width="26" height="29" viewBox="0 0 26 29"><use href="#mic"/></svg>
  <b style="left:47px">董光炯</b></div>
</div>
<!-- card 5 -->
<div class="card" style="top:958.500px"><div class="in"></div>
 <div class="av"><svg width="98" height="98" viewBox="0 0 98 98"><rect width="98" height="98" fill="#f8f8f8"/>
<g transform="rotate(6 49 53)">
<circle cx="49" cy="52" r="22.500" fill="#000"/>
<ellipse cx="49" cy="53" rx="47" ry="13.500" fill="#f8f8f8"/>
<ellipse cx="49" cy="53" rx="45" ry="11" fill="#000"/>
<ellipse cx="48" cy="50.500" rx="32" ry="6" fill="#f8f8f8"/>
<path d="M27 50 A22.500 22.500 0 0 1 71 50 C60 54 38 54 27 50 Z" fill="#000"/>
</g>
<path d="M42 44 C40 32 46 22 56 21 C66 20 73 28 72.500 38 C72 45 66 48.500 58 48.500 C52 48.500 46 48 42 44 Z" fill="#000"/>
<path d="M24 32 C25 30 28 30 30 29 C32 26 33 22 35.500 20.500 C37 22 39 24 40.500 24.500 C44 26 46 30 46 35 C46 41 42 45 37 45 C31 45 27 40 26 36 C25 35 24 33.500 24 32 Z" fill="#000"/>
<path d="M50 40 C48 32 52 25 58 23.500" fill="none" stroke="#f8f8f8" stroke-width=".9"/><path d="M48 44 C54 47 62 46 66 40" fill="none" stroke="#f8f8f8" stroke-width=".9"/><path d="M46 46 C54 51 64 50 70 45" fill="none" stroke="#f8f8f8" stroke-width=".8"/>
<path d="M30 38 C31.500 37 33 37 34.500 36" fill="none" stroke="#f8f8f8" stroke-width=".7"/><path d="M37 33.500 C38.500 32.500 40 32.500 41 31.500" fill="none" stroke="#f8f8f8" stroke-width=".7"/>
<path d="M33 43.500 C34 46 37 46.500 38.500 44.500 C40 46 43 45.500 43.500 43" fill="none" stroke="#f8f8f8" stroke-width=".8"/>
</svg>
</div>
 <div class="lab" style="width:118px">
  <svg style="left:11px;top:8px" width="26" height="28" viewBox="0 0 26 28"><use href="#micm"/></svg>
  <b style="left:47px">王莘竹</b></div>
</div>
<!-- card 6 -->
<div class="card spk" style="top:1157px"><div class="in"></div>
 <div class="av"><svg width="98" height="98" viewBox="0 0 98 98">
<defs><radialGradient id="lg1" cx=".62" cy=".22" r=".55"><stop offset="0" stop-color="#0c6838"/><stop offset=".5" stop-color="#094220"/><stop offset="1" stop-color="#041c0d"/></radialGradient>
<linearGradient id="pt" x1="0" y1="1" x2="0" y2="0"><stop offset="0" stop-color="#fae6f2"/><stop offset=".55" stop-color="#f0a4d8"/><stop offset="1" stop-color="#e030a8"/></linearGradient>
<filter id="bl"><feGaussianBlur stdDeviation=".6"/></filter><filter id="bl3"><feGaussianBlur stdDeviation="4"/></filter></defs>
<rect width="98" height="98" fill="url(#lg1)"/>
<ellipse cx="20" cy="22" rx="24" ry="18" fill="#010604" opacity=".9" filter="url(#bl3)"/>
<path d="M0 70 C30 60 60 90 98 70 L98 98 L0 98 Z" fill="#0a3c18" opacity=".8" filter="url(#bl3)"/>
<rect x="47.500" y="74" width="2.600" height="24" fill="#06280f"/>
<g filter="url(#bl)" stroke="#d93aa8" stroke-width=".55" stroke-linejoin="round">
<path d="M20 28 C30 28 38 40 40 56 L30 56 C24 48 20 38 20 28 Z" fill="url(#pt)"/>
<path d="M45 23 C52 28 56 44 52 56 L40 56 C38 44 40 30 45 23 Z" fill="url(#pt)"/>
<path d="M58 24 C66 30 66 46 60 58 L50 56 C50 44 52 32 58 24 Z" fill="#ee9ad4"/>
<path d="M82 33 C80 46 72 56 62 60 L58 54 C62 44 70 36 82 33 Z" fill="url(#pt)"/>
<path d="M9 50 C20 48 34 52 42 62 L34 66 C24 64 14 58 9 50 Z" fill="#ee8fd0"/>
<path d="M91 49 C84 60 72 66 60 66 L58 60 C68 52 80 48 91 49 Z" fill="#ec86cc"/>
<path d="M12 63 C22 62 34 64 42 68 L30 70 C22 70 16 67 12 63 Z" fill="#e855b4"/>
<path d="M84 61 C78 68 68 70 58 68 L62 64 C70 62 78 60 84 61 Z" fill="#e650b0"/>
<path d="M33 43 C42 44 50 54 50 66 L40 66 C34 60 32 52 33 43 Z" fill="#f4c4e4"/>
<path d="M48 58 C54 52 62 52 68 54 C66 62 60 68 52 68 C48 66 47 62 48 58 Z" fill="#ea80cc"/>
<path d="M31 72 C36 66 46 66 52 68 C50 76 42 80 36 78 C32 77 30 75 31 72 Z" fill="#f8e4d8"/>
<path d="M54 68 C62 66 70 68 74 72 C70 76 62 76 56 73 Z" fill="#ee7cc4"/>
<ellipse cx="51" cy="50" rx="4.500" ry="3.200" fill="#f4dc2a" stroke="none"/>
</g>
</svg>
</div>
 <div class="lab" style="width:137px">
  <svg style="left:11px;top:8px" width="26" height="29" viewBox="0 0 26 29"><use href="#mic"/><path d="M7.500 7 L17.500 7 L17.500 14 A5 5 0 0 1 7.500 14 Z" fill="#4ce850"/></svg>
  <b style="left:47px">冷暖自知</b></div>
</div>
<div class="abs" style="left:4px;top:730px;width:2.300px;height:47.500px;background:#a4a6aa"></div>
<div class="abs" style="left:10px;top:730px;width:2.300px;height:47.500px;background:#a4a6aa"></div>
</div>
</body>
</html>
